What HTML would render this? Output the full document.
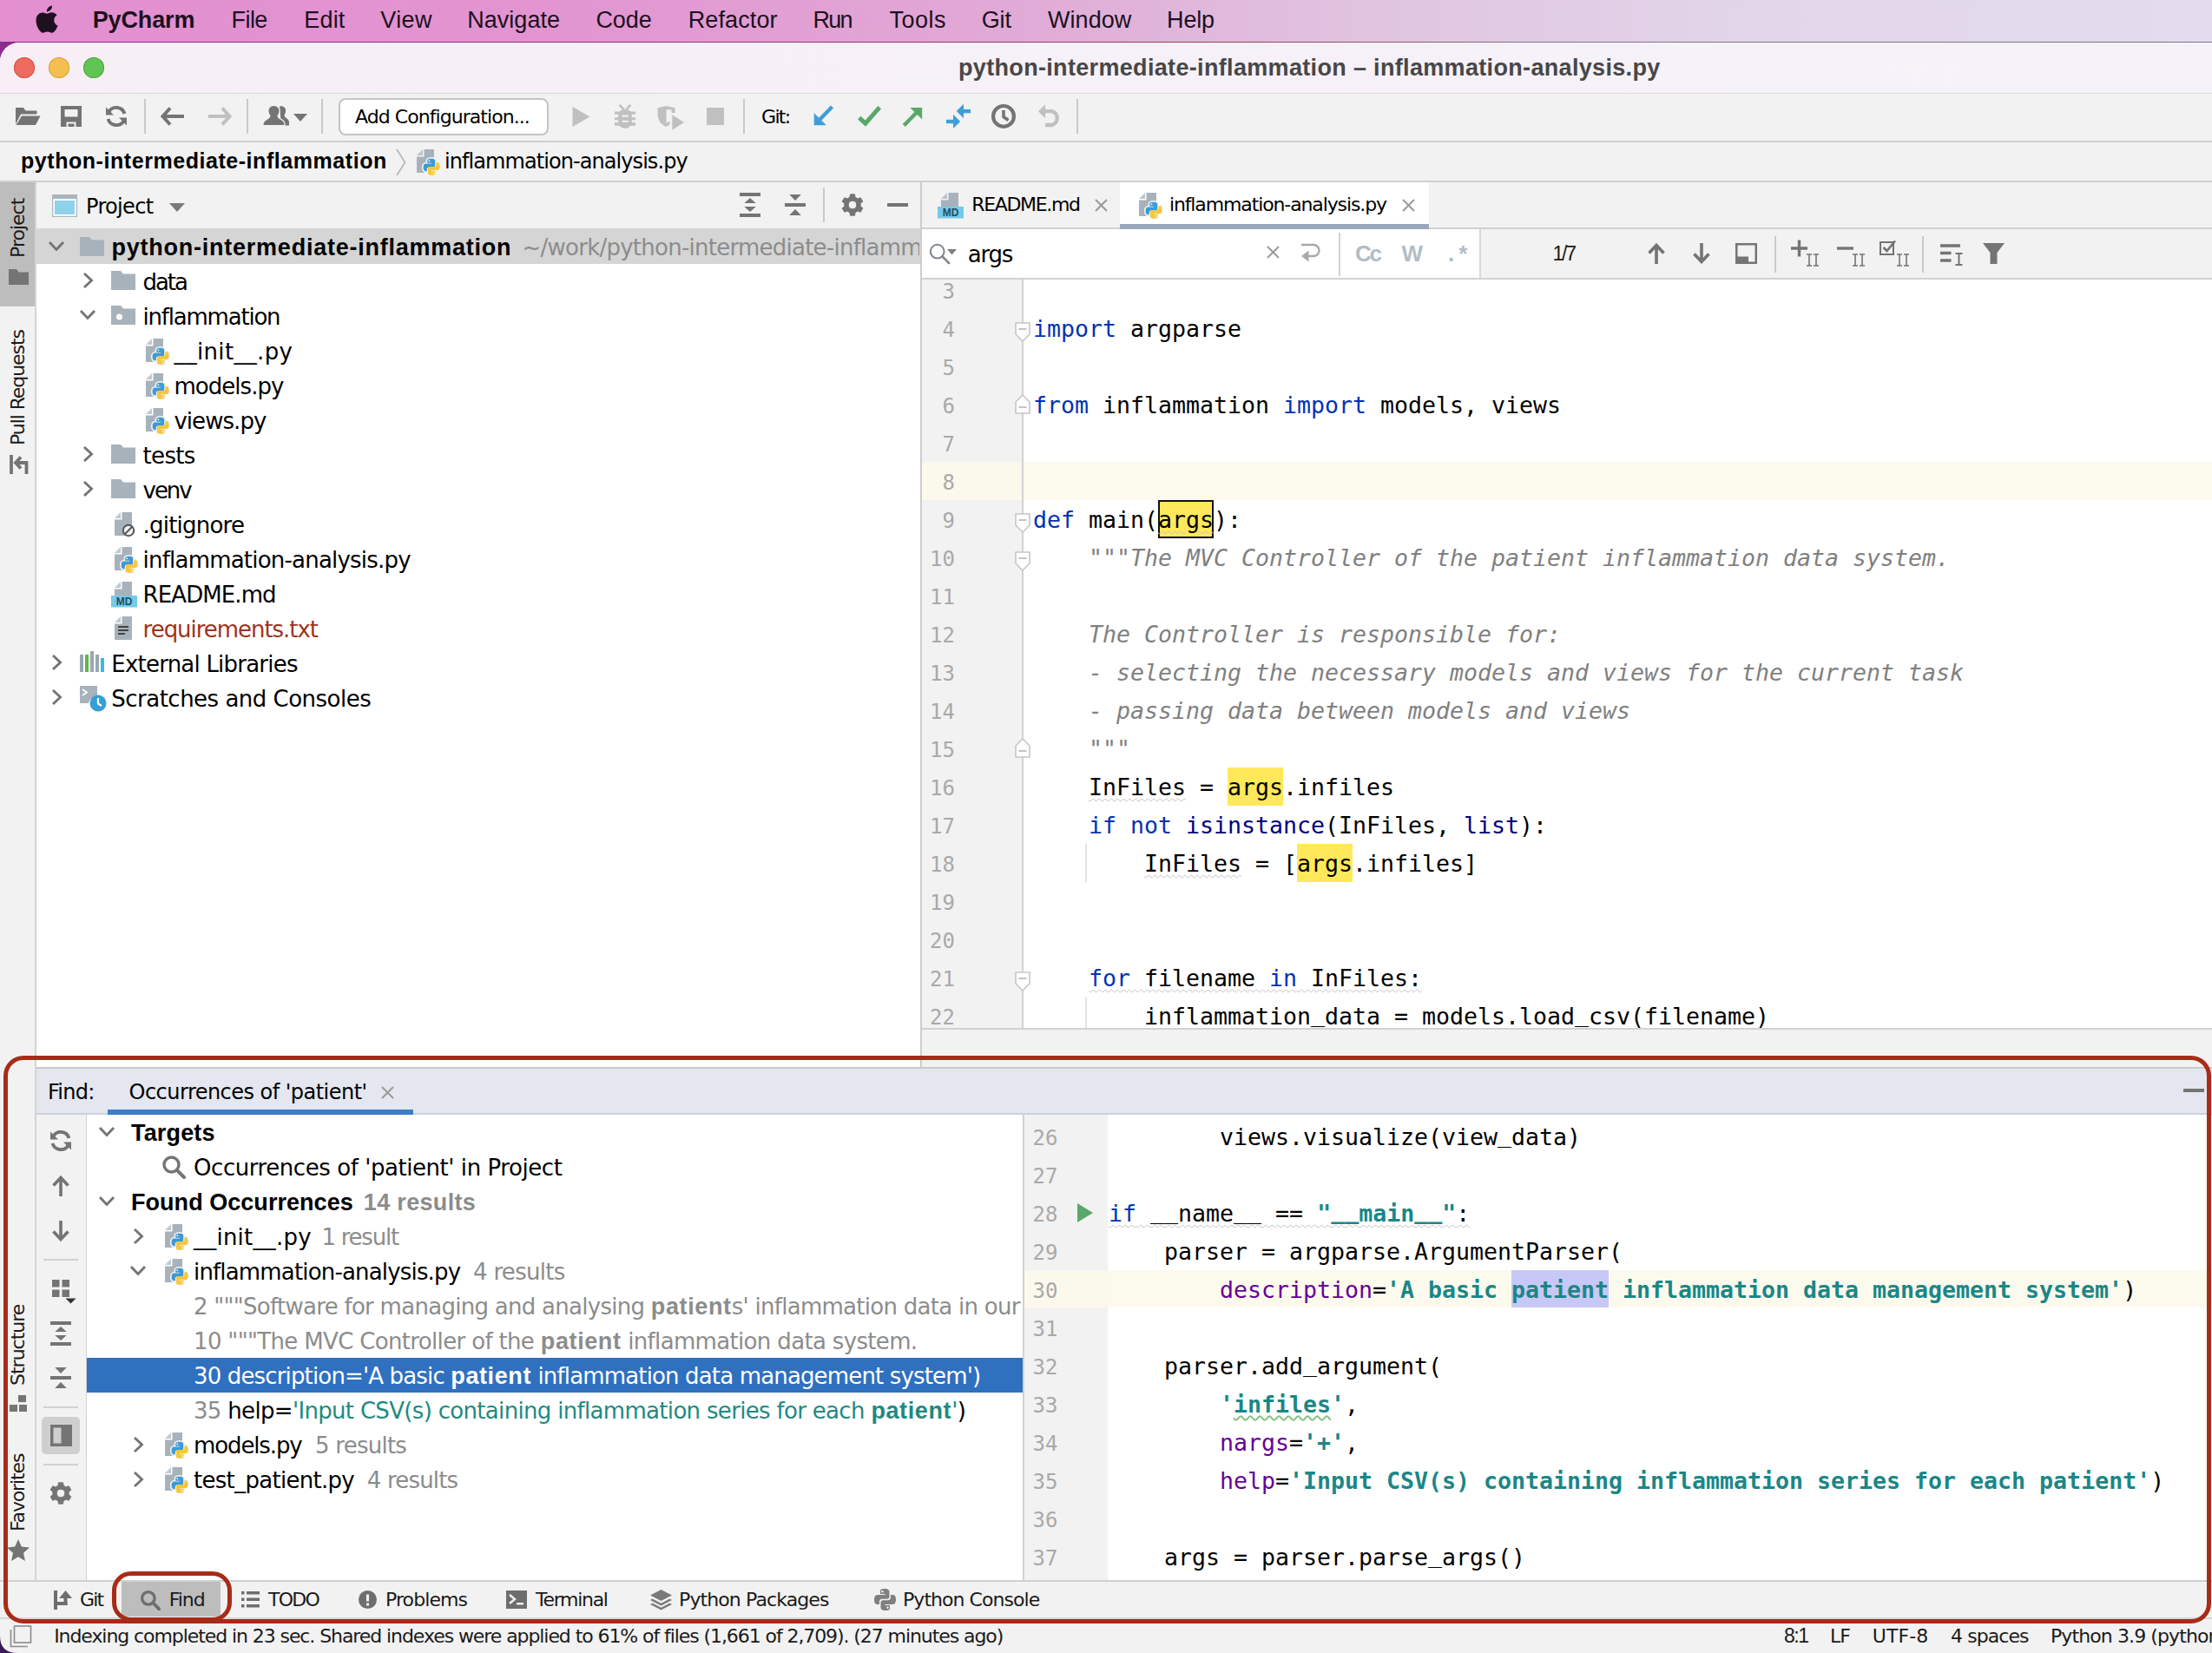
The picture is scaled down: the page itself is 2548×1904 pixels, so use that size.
<!DOCTYPE html>
<html><head><meta charset="utf-8"><title>PyCharm</title>
<style>
html,body{margin:0;padding:0;}
body{width:2548px;height:1904px;position:relative;overflow:hidden;background:#f2f2f2;}
#root{position:absolute;left:0;top:0;width:2548px;height:1904px;overflow:hidden;}
#root div,#root svg,#root span.t{position:absolute;}
span.t{white-space:pre;}
.k{color:#0033b3}.b{color:#000080}.s{color:#1a8787;font-weight:700}.c{color:#808080;font-style:italic}.p{color:#660099}
.hl{background:#fbe54d}.hc{background:#fbe54d;box-shadow:0 0 0 2px #1a1a1a}
.wv{text-decoration:underline wavy #c2c2c2 1.3px;text-underline-offset:3px}
.wg{text-decoration:underline wavy #7fbf7f 1.5px;text-underline-offset:3px}
.g{color:#8c8c8c}
.u{position:relative;top:-3px}
span.t b{font-family:'Liberation Sans',sans-serif;font-size:1.04em;letter-spacing:0.6px}

</style></head><body><div id="root">
<div style="left:0px;top:0px;width:2548px;height:49px;background:linear-gradient(90deg,#e38fd0 0%,#e295d1 25%,#e1a9d6 45%,#e0c4e0 62%,#e2d6ea 80%,#e4dbee 100%);"></div>
<div style="left:0px;top:48px;width:2548px;height:24px;background:linear-gradient(90deg,#8b2a8f 0%,#8e2f7c 30%,#96404f 55%,#7a7a80 70%,#77777c 100%);"></div>
<div style="left:0px;top:49px;width:2548px;height:1860px;background:#f6eff6;border-radius:22px 0 0 0;"></div>
<div style="left:0px;top:49px;width:2548px;height:58px;background:linear-gradient(90deg,#f7eef6 0%,#f6f1f8 60%,#f5f3f9 100%);border-radius:22px 0 0 0;"></div>
<svg style="left:39px;top:5px;" width="28" height="34.5" viewBox="0 0 26 32"><path fill="#1d1020" d="M21.6 16.9c0-3.6 2.9-5.3 3.1-5.4-1.7-2.5-4.3-2.8-5.2-2.8-2.2-.2-4.3 1.3-5.4 1.3s-2.9-1.3-4.7-1.2c-2.4 0-4.7 1.4-5.9 3.6-2.5 4.4-.6 10.9 1.8 14.4 1.2 1.7 2.6 3.7 4.5 3.6 1.8-.1 2.5-1.2 4.700-1.2s2.800 1.200 4.700 1.100c2-.0 3.200-1.800 4.400-3.500 1.400-2 1.900-3.900 2-4-.1 0-3.900-1.500-4-5.900zM18 5.900c1-1.200 1.700-2.900 1.500-4.600-1.400.1-3.200 1-4.200 2.200-.9 1.100-1.700 2.800-1.500 4.400 1.600.1 3.200-.8 4.200-2z"/></svg>
<span class="t" style="left:106.7px;top:10.0px;font:700 27px/27px 'Liberation Sans','DejaVu Sans',sans-serif;color:#1d1020;letter-spacing:-0.12px;">PyCharm</span>
<span class="t" style="left:266.6px;top:10.0px;font:400 27px/27px 'Liberation Sans','DejaVu Sans',sans-serif;color:#1d1020;letter-spacing:-0.60px;">File</span>
<span class="t" style="left:350.3px;top:10.0px;font:400 27px/27px 'Liberation Sans','DejaVu Sans',sans-serif;color:#1d1020;letter-spacing:0.17px;">Edit</span>
<span class="t" style="left:438.3px;top:10.0px;font:400 27px/27px 'Liberation Sans','DejaVu Sans',sans-serif;color:#1d1020;letter-spacing:0.40px;">View</span>
<span class="t" style="left:538.3px;top:10.0px;font:400 27px/27px 'Liberation Sans','DejaVu Sans',sans-serif;color:#1d1020;letter-spacing:0.01px;">Navigate</span>
<span class="t" style="left:686.4px;top:10.0px;font:400 27px/27px 'Liberation Sans','DejaVu Sans',sans-serif;color:#1d1020;letter-spacing:-0.03px;">Code</span>
<span class="t" style="left:792.7px;top:10.0px;font:400 27px/27px 'Liberation Sans','DejaVu Sans',sans-serif;color:#1d1020;letter-spacing:0.11px;">Refactor</span>
<span class="t" style="left:936.6px;top:10.0px;font:400 27px/27px 'Liberation Sans','DejaVu Sans',sans-serif;color:#1d1020;letter-spacing:-1.75px;">Run</span>
<span class="t" style="left:1024.6px;top:10.0px;font:400 27px/27px 'Liberation Sans','DejaVu Sans',sans-serif;color:#1d1020;letter-spacing:0.48px;">Tools</span>
<span class="t" style="left:1130.7px;top:10.0px;font:400 27px/27px 'Liberation Sans','DejaVu Sans',sans-serif;color:#1d1020;letter-spacing:-0.15px;">Git</span>
<span class="t" style="left:1207.0px;top:10.0px;font:400 27px/27px 'Liberation Sans','DejaVu Sans',sans-serif;color:#1d1020;letter-spacing:0.06px;">Window</span>
<span class="t" style="left:1344.1px;top:10.0px;font:400 27px/27px 'Liberation Sans','DejaVu Sans',sans-serif;color:#1d1020;letter-spacing:-0.17px;">Help</span>
<div style="left:16px;top:66px;width:24px;height:24px;background:#ed6a5f;border-radius:50%;box-shadow:inset 0 0 0 1px #d5544a;"></div>
<div style="left:56px;top:66px;width:24px;height:24px;background:#f5bf4f;border-radius:50%;box-shadow:inset 0 0 0 1px #d8a33c;"></div>
<div style="left:96px;top:66px;width:24px;height:24px;background:#61c555;border-radius:50%;box-shadow:inset 0 0 0 1px #4fa73f;"></div>
<span class="t" style="left:1104.0px;top:64.5px;font:700 27px/27px 'Liberation Sans','DejaVu Sans',sans-serif;color:#474747;letter-spacing:0.33px;">python-intermediate-inflammation – inflammation-analysis.py</span>
<div style="left:0px;top:107px;width:2548px;height:56px;background:#f2f2f2;"></div>
<div style="left:0px;top:107px;width:2548px;height:1px;background:#dcdcdc;"></div>
<div style="left:0px;top:162px;width:2548px;height:2px;background:#cfcfcf;"></div>
<svg style="left:17px;top:123px;" width="30" height="22" viewBox="0 0 30 22"><path fill="#747474" d="M1 1 H10 L12.500 4.500 H25.500 V8.500 H7 L1 20 Z"/><path fill="#747474" d="M8 10.500 H29.500 L24 21 H1.500 Z"/></svg>
<svg style="left:70px;top:122px;" width="24" height="24" viewBox="0 0 24 24"><path fill="#747474" fill-rule="evenodd" d="M0 0 H24 V24 H0 Z M4.500 4 V12.500 H19.500 V4 Z M6.500 18.500 V24 H17.500 V18.500 Z"/><rect x="8.500" y="20.500" width="7" height="3.500" fill="#747474"/></svg>
<svg style="left:121px;top:121px;" width="26" height="26" viewBox="0 0 26 26"><path d="M22.500 10 A10 10 0 0 0 4.500 7.500" fill="none" stroke="#747474" stroke-width="3.900"/><path fill="#747474" d="M1 2.500 V11.500 H10 Z"/><path d="M3.500 16 A10 10 0 0 0 21.500 18.500" fill="none" stroke="#747474" stroke-width="3.900"/><path fill="#747474" d="M25 23.500 V14.500 H16 Z"/></svg>
<div style="left:166px;top:114px;width:2px;height:40px;background:#c9c9c9;"></div>
<div style="left:284px;top:114px;width:2px;height:40px;background:#c9c9c9;"></div>
<div style="left:370px;top:114px;width:2px;height:40px;background:#c9c9c9;"></div>
<div style="left:856px;top:114px;width:2px;height:40px;background:#c9c9c9;"></div>
<div style="left:1240px;top:114px;width:2px;height:40px;background:#c9c9c9;"></div>
<svg style="left:185px;top:123px;" width="28" height="22" viewBox="0 0 28 22"><path d="M11 1.500 L2.500 11 L11 20.500 M3 11 H27" fill="none" stroke="#747474" stroke-width="4"/></svg>
<svg style="left:239px;top:123px;" width="28" height="22" viewBox="0 0 28 22"><path d="M17 1.500 L25.500 11 L17 20.500 M25 11 H1" fill="none" stroke="#c0c0c0" stroke-width="4"/></svg>
<svg style="left:303px;top:121px;" width="30" height="24" viewBox="0 0 30 24"><g fill="#747474"><path d="M19 1.500 c4.500 -1.500 8 2 7 6 c-0.500 2.500 -1 3.500 -1.500 4.500 c0.500 3 5.500 3.500 5.500 8 V23.500 H21 Z"/><path stroke="#f2f2f2" stroke-width="1.200" d="M12.500 0.500 c4.500 0 7 3 6.500 7 c-0.300 2.500 -1.200 4 -2 5.200 c0.500 4 8 3.300 8 9.300 V23.500 H0 V22 c0 -6 7.500 -5.300 8 -9.300 c-0.800 -1.200 -1.700 -2.700 -2 -5.200 c-0.500 -4 2 -7 6.500 -7 Z"/></g></svg>
<svg style="left:338px;top:131px;" width="16" height="9" viewBox="0 0 16 9"><path fill="#747474" d="M0 0 H16 L8 9 Z"/></svg>
<svg style="left:659px;top:123px;" width="21" height="23" viewBox="0 0 21 23"><path fill="#c0c0c0" d="M0.500 0 L20.500 11.500 L0.500 23 Z"/></svg>
<svg style="left:708px;top:120px;" width="24" height="28" viewBox="0 0 24 28"><g fill="#c0c0c0"><path d="M12 5.400 C17 5.400 19.800 9.500 19.800 14 V19 C19.800 24.500 16.500 28 12 28 C7.500 28 4.200 24.500 4.200 19 V14 C4.200 9.500 7 5.400 12 5.400 Z"/><rect x="0" y="8.500" width="24" height="3.200"/><rect x="0" y="15.300" width="24" height="2.800"/><rect x="0" y="21.200" width="24" height="3.600"/></g><path d="M5.500 0.800 L10.500 5.800 M18.500 0.800 L13.500 5.800" stroke="#c0c0c0" stroke-width="2.600" fill="none"/><g fill="#f2f2f2"><rect x="8.500" y="12.500" width="7.200" height="2.200"/><rect x="8.500" y="18.800" width="7.200" height="2"/></g></svg>
<svg style="left:757px;top:122px;" width="31" height="28" viewBox="0 0 31 28"><path fill="#c0c0c0" d="M0.600 2.300 L10.500 0 L20.500 2.300 V8 H16.500 V4.200 L10.500 4.200 V20 L14.500 17.500 V21.500 L10.500 24 C3.500 21 0.600 15.500 0.600 9 Z"/><path fill="#c0c0c0" d="M17.300 10.200 L31 19 L17.300 27.800 Z"/></svg>
<svg style="left:814px;top:124px;" width="20" height="20" viewBox="0 0 20 20"><rect width="20" height="20" fill="#c0c0c0"/></svg>
<svg style="left:937px;top:121px;" width="24" height="24" viewBox="0 0 24 24"><path d="M21.500 2 L7 17" stroke="#3f9ed8" stroke-width="4.400" fill="none"/><path fill="#3f9ed8" d="M0.700 9.300 V23.300 H14.800 Z"/></svg>
<svg style="left:987px;top:121px;" width="29" height="25" viewBox="0 0 29 25"><path d="M2.700 14.600 L9.900 21.100 L26.200 2.700" fill="none" stroke="#59a869" stroke-width="5"/></svg>
<svg style="left:1039px;top:122px;" width="24" height="24" viewBox="0 0 24 24"><path d="M2.200 22.500 L16.500 8" stroke="#59a869" stroke-width="4.400" fill="none"/><path fill="#59a869" d="M9.300 2 H23.200 V15.500 Z"/></svg>
<svg style="left:1089px;top:119px;" width="30" height="30" viewBox="0 0 30 30"><g fill="#3f9ed8"><path d="M12.800 9.100 L21 0.800 V17.200 Z"/><rect x="20.500" y="6.900" width="8.600" height="4.400"/><path d="M17.100 20.900 L9 12.700 V29 Z"/><rect x="0.900" y="18.800" width="8.600" height="4.400"/></g></svg>
<svg style="left:1141px;top:119px;" width="30" height="30" viewBox="0 0 30 30"><circle cx="15" cy="14.900" r="11.900" fill="none" stroke="#747474" stroke-width="4.200"/><path d="M15 8 V15.500 L20.500 19.500" fill="none" stroke="#747474" stroke-width="3.600"/></svg>
<svg style="left:1195px;top:120px;" width="28" height="27" viewBox="0 0 28 27"><path d="M8.500 8.200 H17 A8.300 8.300 0 0 1 17 24 H9" fill="none" stroke="#c0c0c0" stroke-width="4.300"/><path fill="#c0c0c0" d="M1 8.200 L9 0.200 V16.200 Z"/></svg>
<div style="left:390px;top:112.5px;width:242px;height:43px;background:#fff;border:2px solid #c4c4c4;border-radius:8px;box-sizing:border-box;"></div>
<span class="t" style="left:409.0px;top:124.4px;font:400 22px/22px 'DejaVu Sans','Liberation Sans',sans-serif;color:#000;letter-spacing:-0.95px;">Add Configuration...</span>
<span class="t" style="left:877.0px;top:123.9px;font:400 22px/22px 'DejaVu Sans','Liberation Sans',sans-serif;color:#000;letter-spacing:-1.67px;">Git:</span>
<div style="left:0px;top:164px;width:2548px;height:44px;background:#f2f2f2;"></div>
<div style="left:0px;top:208px;width:2548px;height:2px;background:#cfcfcf;"></div>
<span class="t" style="left:24.0px;top:173.4px;font:700 25.0px/25.0px 'Liberation Sans','DejaVu Sans',sans-serif;color:#000;letter-spacing:0.55px;">python-intermediate-inflammation</span>
<svg style="left:456px;top:171px;" width="12" height="32" viewBox="0 0 12 32"><path d="M1 1 L10.500 16 L1 31" fill="none" stroke="#b0b4b8" stroke-width="1.600"/></svg>
<svg style="left:480px;top:172px;" width="28" height="30" viewBox="0 0 28 30"><path fill="#a7b2bb" d="M8.500 0 H20 V27 H0 V8.500 H8.500 Z"/><path fill="#a7b2bb" opacity="0.7" d="M0 7 L7 0 V7 Z"/>
<g transform="translate(7.600,10.700) scale(0.845)">
<path fill="#f2f2f2" stroke="#f2f2f2" stroke-width="4" d="M11 0 C5 0 5.500 2.600 5.500 2.600 V6 H11.200 V7 H3.300 C3.300 7 0 6.600 0 12 C0 17.400 2.900 17.200 2.900 17.200 H5 V14.500 C5 14.500 4.900 11.600 7.800 11.600 H13.400 C13.400 11.600 16.100 11.700 16.100 9 V3.200 C16.100 3.200 16.500 0 11 0 Z"/>
<path fill="#f2f2f2" stroke="#f2f2f2" stroke-width="3" d="M11.300 22.500 C16.800 22.500 16.400 20.100 16.400 20.100 V16.700 H11.200 V15.700 H19 C19 15.700 22.500 16.100 22.500 10.600 C22.500 5.200 19.400 5.400 19.400 5.400 H17.600 V7.900 C17.600 7.900 17.700 11 14.600 11 H9.200 C9.200 11 6.300 10.900 6.300 13.800 V19.200 C6.300 19.200 5.900 22.500 11.300 22.500 Z"/>
<path fill="#3d9ad6" d="M11 0 C5 0 5.500 2.600 5.500 2.600 V6 H11.200 V7 H3.300 C3.300 7 0 6.600 0 12 C0 17.400 2.900 17.200 2.900 17.200 H5 V14.500 C5 14.500 4.900 11.600 7.800 11.600 H13.400 C13.400 11.600 16.100 11.700 16.100 9 V3.200 C16.100 3.200 16.500 0 11 0 Z"/>
<path fill="#f5c83c" d="M11.300 22.500 C16.800 22.500 16.400 20.100 16.400 20.100 V16.700 H11.200 V15.700 H19 C19 15.700 22.500 16.100 22.500 10.600 C22.500 5.200 19.400 5.400 19.400 5.400 H17.600 V7.900 C17.600 7.900 17.700 11 14.600 11 H9.200 C9.200 11 6.300 10.900 6.300 13.800 V19.200 C6.300 19.200 5.900 22.500 11.300 22.500 Z"/>
<circle cx="8" cy="3" r="1.100" fill="#f2f2f2"/><circle cx="14.500" cy="19.600" r="1.100" fill="#f2f2f2"/>
</g></svg>
<span class="t" style="left:512.0px;top:174.4px;font:400 24px/24px 'DejaVu Sans','Liberation Sans',sans-serif;color:#000;letter-spacing:-0.93px;">inflammation-analysis.py</span>
<div style="left:0px;top:210px;width:41px;height:1610px;background:#f2f2f2;"></div>
<div style="left:40px;top:210px;width:2px;height:1610px;background:#d4d4d4;"></div>
<div style="left:0px;top:210px;width:40px;height:143px;background:#bdbdbd;"></div>
<span class="t" style="left:9.9px;top:-10.6px;font:400 22px/22px 'DejaVu Sans','Liberation Sans',sans-serif;color:#1a1a1a;letter-spacing:-1.00px;top:297px;transform-origin:0 0;transform:rotate(-90deg);">Project</span>
<svg style="left:10px;top:310px;" width="23" height="18" viewBox="0 0 23 18"><path fill="#747474" d="M0 0 H9 L11.500 3.500 H23 V18 H0 Z"/></svg>
<span class="t" style="left:9.9px;top:-10.6px;font:400 22px/22px 'DejaVu Sans','Liberation Sans',sans-serif;color:#1a1a1a;letter-spacing:-1.08px;top:513px;transform-origin:0 0;transform:rotate(-90deg);">Pull Requests</span>
<svg style="left:11px;top:524px;" width="22" height="22" viewBox="0 0 22 22"><g fill="none" stroke="#747474" stroke-width="3.800"><path d="M2 0 V22"/><path d="M7.500 9 H19.500 V22"/><path d="M13 2.500 L7 9 L13 15.500"/></g></svg>
<span class="t" style="left:9.9px;top:-10.6px;font:400 22px/22px 'DejaVu Sans','Liberation Sans',sans-serif;color:#1a1a1a;letter-spacing:-1.00px;top:1596px;transform-origin:0 0;transform:rotate(-90deg);">Structure</span>
<svg style="left:11px;top:1607px;" width="21" height="20" viewBox="0 0 21 20"><g fill="#747474"><rect x="10" y="0" width="9" height="8"/><rect x="0" y="11" width="9" height="8"/><rect x="11" y="11" width="9" height="8"/></g></svg>
<span class="t" style="left:9.9px;top:-10.6px;font:400 22px/22px 'DejaVu Sans','Liberation Sans',sans-serif;color:#1a1a1a;letter-spacing:-1.12px;top:1764px;transform-origin:0 0;transform:rotate(-90deg);">Favorites</span>
<svg style="left:8px;top:1773px;" width="26" height="25" viewBox="0 0 26 25"><path fill="#747474" d="M13 0 L16.800 8.600 L26 9.500 L19 15.800 L21 25 L13 20.200 L5 25 L7 15.800 L0 9.500 L9.200 8.600 Z"/></svg>
<div style="left:42px;top:210px;width:1018px;height:53px;background:#f2f2f2;"></div>
<div style="left:42px;top:263px;width:1018px;height:960px;background:#fff;"></div>
<svg style="left:60px;top:224px;" width="29" height="26" viewBox="0 0 29 26"><rect x="0.500" y="0.500" width="28" height="25" fill="#fff" stroke="#aab5bd" stroke-width="1.500"/><rect x="0" y="0" width="29" height="5" fill="#aab5bd"/><rect x="3" y="7" width="23" height="16" fill="#8fd2ea"/></svg>
<span class="t" style="left:99.0px;top:225.9px;font:400 24px/24px 'DejaVu Sans','Liberation Sans',sans-serif;color:#000;letter-spacing:-0.67px;">Project</span>
<svg style="left:195px;top:234px;" width="18" height="10" viewBox="0 0 18 10"><path fill="#7a7a7a" d="M0 0 H18 L9 10 Z"/></svg>
<svg style="left:852px;top:222px;" width="24" height="28" viewBox="0 0 24 28"><g fill="#747474"><rect x="0" y="0" width="24" height="4"/><rect x="0" y="24" width="24" height="4"/><path d="M12 6 L18.700 12 H5.300 Z"/><path d="M12 22 L18.700 16 H5.300 Z"/></g></svg>
<svg style="left:904px;top:224px;" width="24" height="24" viewBox="0 0 24 24"><g fill="#747474"><rect x="0" y="10" width="24" height="4"/><path d="M12 7 L18.800 0 H5.200 Z"/><path d="M12 17 L18.800 24 H5.200 Z"/></g></svg>
<div style="left:948px;top:216px;width:2px;height:40px;background:#c9c9c9;"></div>
<svg style="left:969px;top:223px;" width="26" height="26" viewBox="0 0 26 26"><path fill="#747474" fill-rule="evenodd" stroke="#747474" stroke-width="1" stroke-linejoin="round" d="M9.99 4.20 L10.42 0.87 L15.58 0.87 L16.01 4.20 L19.11 5.99 L22.21 4.70 L24.80 9.17 L22.13 11.21 L22.13 14.79 L24.80 16.83 L22.21 21.30 L19.11 20.01 L16.01 21.80 L15.58 25.13 L10.42 25.13 L9.99 21.80 L6.89 20.01 L3.79 21.30 L1.20 16.83 L3.87 14.79 L3.87 11.21 L1.20 9.17 L3.79 4.70 L6.89 5.99 Z M13 8.200 a4.800 4.800 0 1 0 0.010 0 Z"/></svg>
<div style="left:1022px;top:234px;width:24px;height:4px;background:#747474;"></div>
<div style="left:1060px;top:210px;width:2px;height:1019px;background:#cdcdcd;"></div>
<div style="left:42px;top:262.5px;width:1018px;height:41px;background:#d5d5d5;"></div>
<svg style="left:55px;top:276.5px;" width="20" height="14" viewBox="0 0 20 14"><path d="M2 2 L10 10.500 L18 2" fill="none" stroke="#747474" stroke-width="2.900"/></svg>
<svg style="left:92px;top:272.5px;" width="28" height="22" viewBox="0 0 28 22"><path fill="#a7b2bb" d="M0 0 H11 L14 3.500 H28 V22 H0 Z"/></svg>
<span class="t" style="left:128.5px;top:272.0px;font:700 27.0px/27.0px 'Liberation Sans','DejaVu Sans',sans-serif;color:#000;letter-spacing:0.76px;">python-intermediate-inflammation</span>
<div style="left:600px;top:264px;width:459px;height:39px;background:transparent;overflow:hidden;"></div>
<div style="left:600px;top:264px;width:459px;height:39px;overflow:hidden;"><span class="t" style="position:absolute;left:1.5px;top:7.5px;font:400 26px/26px 'DejaVu Sans','Liberation Sans',sans-serif;color:#8c8c8c;letter-spacing:-0.75px;">~/work/python-intermediate-inflammation</span></div>
<svg style="left:94.5px;top:313px;" width="14" height="20" viewBox="0 0 14 20"><path d="M2 2 L10.500 10 L2 18" fill="none" stroke="#747474" stroke-width="2.900"/></svg>
<svg style="left:128px;top:312px;" width="28" height="22" viewBox="0 0 28 22"><path fill="#a7b2bb" d="M0 0 H11 L14 3.500 H28 V22 H0 Z"/></svg>
<span class="t" style="left:164.6px;top:311.5px;font:400 26px/26px 'DejaVu Sans','Liberation Sans',sans-serif;color:#000;letter-spacing:-2.10px;">data</span>
<svg style="left:91.0px;top:356px;" width="20" height="14" viewBox="0 0 20 14"><path d="M2 2 L10 10.500 L18 2" fill="none" stroke="#747474" stroke-width="2.900"/></svg>
<svg style="left:128px;top:352px;" width="28" height="22" viewBox="0 0 28 22"><path fill="#a7b2bb" d="M0 0 H11 L14 3.500 H28 V22 H0 Z"/><circle cx="9.500" cy="13" r="3.600" fill="#fff"/></svg>
<span class="t" style="left:164.6px;top:351.5px;font:400 26px/26px 'DejaVu Sans','Liberation Sans',sans-serif;color:#000;letter-spacing:-1.22px;">inflammation</span>
<svg style="left:167.6px;top:390px;" width="28" height="30" viewBox="0 0 28 30"><path fill="#a7b2bb" d="M8.500 0 H20 V27 H0 V8.500 H8.500 Z"/><path fill="#a7b2bb" opacity="0.7" d="M0 7 L7 0 V7 Z"/>
<g transform="translate(7.600,10.700) scale(0.845)">
<path fill="#f2f2f2" stroke="#f2f2f2" stroke-width="4" d="M11 0 C5 0 5.500 2.600 5.500 2.600 V6 H11.200 V7 H3.300 C3.300 7 0 6.600 0 12 C0 17.400 2.900 17.200 2.900 17.200 H5 V14.500 C5 14.500 4.900 11.600 7.800 11.600 H13.400 C13.400 11.600 16.100 11.700 16.100 9 V3.200 C16.100 3.200 16.500 0 11 0 Z"/>
<path fill="#f2f2f2" stroke="#f2f2f2" stroke-width="3" d="M11.300 22.500 C16.800 22.500 16.400 20.100 16.400 20.100 V16.700 H11.200 V15.700 H19 C19 15.700 22.500 16.100 22.500 10.600 C22.500 5.200 19.400 5.400 19.400 5.400 H17.600 V7.900 C17.600 7.900 17.700 11 14.600 11 H9.200 C9.200 11 6.300 10.900 6.300 13.800 V19.200 C6.300 19.200 5.900 22.500 11.300 22.500 Z"/>
<path fill="#3d9ad6" d="M11 0 C5 0 5.500 2.600 5.500 2.600 V6 H11.200 V7 H3.300 C3.300 7 0 6.600 0 12 C0 17.400 2.900 17.200 2.900 17.200 H5 V14.500 C5 14.500 4.900 11.600 7.800 11.600 H13.400 C13.400 11.600 16.100 11.700 16.100 9 V3.200 C16.100 3.200 16.500 0 11 0 Z"/>
<path fill="#f5c83c" d="M11.300 22.500 C16.800 22.500 16.400 20.100 16.400 20.100 V16.700 H11.200 V15.700 H19 C19 15.700 22.500 16.100 22.500 10.600 C22.500 5.200 19.400 5.400 19.400 5.400 H17.600 V7.900 C17.600 7.900 17.700 11 14.600 11 H9.200 C9.200 11 6.300 10.900 6.300 13.800 V19.200 C6.300 19.200 5.900 22.500 11.300 22.500 Z"/>
<circle cx="8" cy="3" r="1.100" fill="#f2f2f2"/><circle cx="14.500" cy="19.600" r="1.100" fill="#f2f2f2"/>
</g></svg>
<span class="t" style="left:200.4px;top:391.5px;font:400 26px/26px 'DejaVu Sans','Liberation Sans',sans-serif;color:#000;letter-spacing:0.32px;">__init__.py</span>
<svg style="left:167.6px;top:430px;" width="28" height="30" viewBox="0 0 28 30"><path fill="#a7b2bb" d="M8.500 0 H20 V27 H0 V8.500 H8.500 Z"/><path fill="#a7b2bb" opacity="0.7" d="M0 7 L7 0 V7 Z"/>
<g transform="translate(7.600,10.700) scale(0.845)">
<path fill="#f2f2f2" stroke="#f2f2f2" stroke-width="4" d="M11 0 C5 0 5.500 2.600 5.500 2.600 V6 H11.200 V7 H3.300 C3.300 7 0 6.600 0 12 C0 17.400 2.900 17.200 2.900 17.200 H5 V14.500 C5 14.500 4.900 11.600 7.800 11.600 H13.400 C13.400 11.600 16.100 11.700 16.100 9 V3.200 C16.100 3.200 16.500 0 11 0 Z"/>
<path fill="#f2f2f2" stroke="#f2f2f2" stroke-width="3" d="M11.300 22.500 C16.800 22.500 16.400 20.100 16.400 20.100 V16.700 H11.200 V15.700 H19 C19 15.700 22.500 16.100 22.500 10.600 C22.500 5.200 19.400 5.400 19.400 5.400 H17.600 V7.900 C17.600 7.900 17.700 11 14.600 11 H9.200 C9.200 11 6.300 10.900 6.300 13.800 V19.200 C6.300 19.200 5.900 22.500 11.300 22.500 Z"/>
<path fill="#3d9ad6" d="M11 0 C5 0 5.500 2.600 5.500 2.600 V6 H11.200 V7 H3.300 C3.300 7 0 6.600 0 12 C0 17.400 2.900 17.200 2.900 17.200 H5 V14.500 C5 14.500 4.900 11.600 7.800 11.600 H13.400 C13.400 11.600 16.100 11.700 16.100 9 V3.200 C16.100 3.200 16.500 0 11 0 Z"/>
<path fill="#f5c83c" d="M11.300 22.500 C16.800 22.500 16.400 20.100 16.400 20.100 V16.700 H11.200 V15.700 H19 C19 15.700 22.500 16.100 22.500 10.600 C22.500 5.200 19.400 5.400 19.400 5.400 H17.600 V7.900 C17.600 7.900 17.700 11 14.600 11 H9.200 C9.200 11 6.300 10.900 6.300 13.800 V19.200 C6.300 19.200 5.900 22.500 11.300 22.500 Z"/>
<circle cx="8" cy="3" r="1.100" fill="#f2f2f2"/><circle cx="14.500" cy="19.600" r="1.100" fill="#f2f2f2"/>
</g></svg>
<span class="t" style="left:200.4px;top:431.5px;font:400 26px/26px 'DejaVu Sans','Liberation Sans',sans-serif;color:#000;letter-spacing:-0.96px;">models.py</span>
<svg style="left:167.6px;top:470px;" width="28" height="30" viewBox="0 0 28 30"><path fill="#a7b2bb" d="M8.500 0 H20 V27 H0 V8.500 H8.500 Z"/><path fill="#a7b2bb" opacity="0.7" d="M0 7 L7 0 V7 Z"/>
<g transform="translate(7.600,10.700) scale(0.845)">
<path fill="#f2f2f2" stroke="#f2f2f2" stroke-width="4" d="M11 0 C5 0 5.500 2.600 5.500 2.600 V6 H11.200 V7 H3.300 C3.300 7 0 6.600 0 12 C0 17.400 2.900 17.200 2.900 17.200 H5 V14.500 C5 14.500 4.900 11.600 7.800 11.600 H13.400 C13.400 11.600 16.100 11.700 16.100 9 V3.200 C16.100 3.200 16.500 0 11 0 Z"/>
<path fill="#f2f2f2" stroke="#f2f2f2" stroke-width="3" d="M11.300 22.500 C16.800 22.500 16.400 20.100 16.400 20.100 V16.700 H11.200 V15.700 H19 C19 15.700 22.500 16.100 22.500 10.600 C22.500 5.200 19.400 5.400 19.400 5.400 H17.600 V7.900 C17.600 7.900 17.700 11 14.600 11 H9.200 C9.200 11 6.300 10.900 6.300 13.800 V19.200 C6.300 19.200 5.900 22.500 11.300 22.500 Z"/>
<path fill="#3d9ad6" d="M11 0 C5 0 5.500 2.600 5.500 2.600 V6 H11.200 V7 H3.300 C3.300 7 0 6.600 0 12 C0 17.400 2.900 17.200 2.900 17.200 H5 V14.500 C5 14.500 4.900 11.600 7.800 11.600 H13.400 C13.400 11.600 16.100 11.700 16.100 9 V3.200 C16.100 3.200 16.500 0 11 0 Z"/>
<path fill="#f5c83c" d="M11.300 22.500 C16.800 22.500 16.400 20.100 16.400 20.100 V16.700 H11.200 V15.700 H19 C19 15.700 22.500 16.100 22.500 10.600 C22.500 5.200 19.400 5.400 19.400 5.400 H17.600 V7.900 C17.600 7.900 17.700 11 14.600 11 H9.200 C9.200 11 6.300 10.900 6.300 13.800 V19.200 C6.300 19.200 5.900 22.500 11.300 22.500 Z"/>
<circle cx="8" cy="3" r="1.100" fill="#f2f2f2"/><circle cx="14.500" cy="19.600" r="1.100" fill="#f2f2f2"/>
</g></svg>
<span class="t" style="left:200.4px;top:471.5px;font:400 26px/26px 'DejaVu Sans','Liberation Sans',sans-serif;color:#000;letter-spacing:-0.94px;">views.py</span>
<svg style="left:94.5px;top:513px;" width="14" height="20" viewBox="0 0 14 20"><path d="M2 2 L10.500 10 L2 18" fill="none" stroke="#747474" stroke-width="2.900"/></svg>
<svg style="left:128px;top:512px;" width="28" height="22" viewBox="0 0 28 22"><path fill="#a7b2bb" d="M0 0 H11 L14 3.500 H28 V22 H0 Z"/></svg>
<span class="t" style="left:164.6px;top:511.5px;font:400 26px/26px 'DejaVu Sans','Liberation Sans',sans-serif;color:#000;letter-spacing:-0.70px;">tests</span>
<svg style="left:94.5px;top:553px;" width="14" height="20" viewBox="0 0 14 20"><path d="M2 2 L10.500 10 L2 18" fill="none" stroke="#747474" stroke-width="2.900"/></svg>
<svg style="left:128px;top:552px;" width="28" height="22" viewBox="0 0 28 22"><path fill="#a7b2bb" d="M0 0 H11 L14 3.500 H28 V22 H0 Z"/></svg>
<span class="t" style="left:164.6px;top:551.5px;font:400 26px/26px 'DejaVu Sans','Liberation Sans',sans-serif;color:#000;letter-spacing:-2.10px;">venv</span>
<svg style="left:130px;top:590px;" width="28" height="30" viewBox="0 0 28 30"><g transform="translate(2,0)"><path fill="#a7b2bb" d="M8.500 0 H20 V27 H0 V8.500 H8.500 Z"/><path fill="#a7b2bb" opacity="0.7" d="M0 7 L7 0 V7 Z"/></g><circle cx="18" cy="21" r="6.200" fill="#f2f2f2" stroke="#555" stroke-width="2"/><path d="M13.800 25.200 L22.200 16.800" stroke="#555" stroke-width="2"/></svg>
<span class="t" style="left:164.6px;top:591.5px;font:400 26px/26px 'DejaVu Sans','Liberation Sans',sans-serif;color:#000;letter-spacing:-0.79px;">.gitignore</span>
<svg style="left:132px;top:630px;" width="28" height="30" viewBox="0 0 28 30"><path fill="#a7b2bb" d="M8.500 0 H20 V27 H0 V8.500 H8.500 Z"/><path fill="#a7b2bb" opacity="0.7" d="M0 7 L7 0 V7 Z"/>
<g transform="translate(7.600,10.700) scale(0.845)">
<path fill="#f2f2f2" stroke="#f2f2f2" stroke-width="4" d="M11 0 C5 0 5.500 2.600 5.500 2.600 V6 H11.200 V7 H3.300 C3.300 7 0 6.600 0 12 C0 17.400 2.900 17.200 2.900 17.200 H5 V14.500 C5 14.500 4.900 11.600 7.800 11.600 H13.400 C13.400 11.600 16.100 11.700 16.100 9 V3.200 C16.100 3.200 16.500 0 11 0 Z"/>
<path fill="#f2f2f2" stroke="#f2f2f2" stroke-width="3" d="M11.300 22.500 C16.800 22.500 16.400 20.100 16.400 20.100 V16.700 H11.200 V15.700 H19 C19 15.700 22.500 16.100 22.500 10.600 C22.500 5.200 19.400 5.400 19.400 5.400 H17.600 V7.900 C17.600 7.900 17.700 11 14.600 11 H9.200 C9.200 11 6.300 10.900 6.300 13.800 V19.200 C6.300 19.200 5.900 22.500 11.300 22.500 Z"/>
<path fill="#3d9ad6" d="M11 0 C5 0 5.500 2.600 5.500 2.600 V6 H11.200 V7 H3.300 C3.300 7 0 6.600 0 12 C0 17.400 2.900 17.200 2.900 17.200 H5 V14.500 C5 14.500 4.900 11.600 7.800 11.600 H13.400 C13.400 11.600 16.100 11.700 16.100 9 V3.200 C16.100 3.200 16.500 0 11 0 Z"/>
<path fill="#f5c83c" d="M11.300 22.500 C16.800 22.500 16.400 20.100 16.400 20.100 V16.700 H11.200 V15.700 H19 C19 15.700 22.500 16.100 22.500 10.600 C22.500 5.200 19.400 5.400 19.400 5.400 H17.600 V7.900 C17.600 7.900 17.700 11 14.600 11 H9.200 C9.200 11 6.300 10.900 6.300 13.800 V19.200 C6.300 19.200 5.900 22.500 11.300 22.500 Z"/>
<circle cx="8" cy="3" r="1.100" fill="#f2f2f2"/><circle cx="14.500" cy="19.600" r="1.100" fill="#f2f2f2"/>
</g></svg>
<span class="t" style="left:164.6px;top:631.5px;font:400 26px/26px 'DejaVu Sans','Liberation Sans',sans-serif;color:#000;letter-spacing:-0.79px;">inflammation-analysis.py</span>
<svg style="left:128px;top:670px;" width="30" height="30" viewBox="0 0 30 30"><g transform="translate(4,0)"><path fill="#a7b2bb" d="M8.500 0 H20 V27 H0 V8.500 H8.500 Z"/><path fill="#a7b2bb" opacity="0.7" d="M0 7 L7 0 V7 Z"/></g><rect x="0" y="16" width="30" height="13.500" fill="#fff"/><rect x="0" y="16" width="30" height="13.500" fill="#40b6e0" opacity="0.72"/><text x="15" y="27.300" font-family="'Liberation Sans',sans-serif" font-weight="700" font-size="12" fill="#234a5e" text-anchor="middle">MD</text></svg>
<span class="t" style="left:164.6px;top:671.5px;font:400 26px/26px 'DejaVu Sans','Liberation Sans',sans-serif;color:#000;letter-spacing:-0.91px;">README.md</span>
<svg style="left:129px;top:710px;" width="26" height="28" viewBox="0 0 26 28"><g transform="translate(3,0)"><path fill="#a7b2bb" d="M8.500 0 H20 V27 H0 V8.500 H8.500 Z"/><path fill="#a7b2bb" opacity="0.7" d="M0 7 L7 0 V7 Z"/></g><g fill="#444"><rect x="7" y="11" width="12" height="2"/><rect x="7" y="15" width="12" height="2"/><rect x="7" y="19" width="8" height="2"/></g></svg>
<span class="t" style="left:164.6px;top:711.5px;font:400 26px/26px 'DejaVu Sans','Liberation Sans',sans-serif;color:#a0331a;letter-spacing:-1.04px;">requirements.txt</span>
<svg style="left:59px;top:753px;" width="14" height="20" viewBox="0 0 14 20"><path d="M2 2 L10.500 10 L2 18" fill="none" stroke="#747474" stroke-width="2.900"/></svg>
<svg style="left:92px;top:750px;" width="28" height="24" viewBox="0 0 28 24"><rect x="0" y="4" width="4" height="20" fill="#9aa7b0"/><rect x="6" y="4" width="4" height="20" fill="#62b543"/><rect x="12" y="0" width="4" height="24" fill="#9aa7b0"/><rect x="18" y="4" width="4" height="20" fill="#9aa7b0"/><rect x="24" y="8" width="4" height="16" fill="#40b6e0"/></svg>
<span class="t" style="left:128.3px;top:751.5px;font:400 26px/26px 'DejaVu Sans','Liberation Sans',sans-serif;color:#000;letter-spacing:-0.78px;">External Libraries</span>
<svg style="left:59px;top:793px;" width="14" height="20" viewBox="0 0 14 20"><path d="M2 2 L10.500 10 L2 18" fill="none" stroke="#747474" stroke-width="2.900"/></svg>
<svg style="left:92px;top:790px;" width="31" height="30" viewBox="0 0 31 30"><path fill="#a7b2bb" d="M0 0 H20 V12 A10 10 0 0 0 10 20 H0 Z"/><path d="M3 4 L8 7.500 L3 11" fill="none" stroke="#fff" stroke-width="1.800"/><circle cx="21" cy="20" r="9.500" fill="#389fd6"/><path d="M21 14 V20.500 L25 23" fill="none" stroke="#fff" stroke-width="2.200"/></svg>
<span class="t" style="left:128.3px;top:791.5px;font:400 26px/26px 'DejaVu Sans','Liberation Sans',sans-serif;color:#000;letter-spacing:-0.51px;">Scratches and Consoles</span>
<div style="left:1062px;top:210px;width:1486px;height:53px;background:#f2f2f2;"></div>
<div style="left:1062px;top:262px;width:1486px;height:2px;background:#d1d1d1;"></div>
<svg style="left:1080px;top:222px;" width="30" height="30" viewBox="0 0 30 30"><g transform="translate(4,0)"><path fill="#a7b2bb" d="M8.500 0 H20 V27 H0 V8.500 H8.500 Z"/><path fill="#a7b2bb" opacity="0.7" d="M0 7 L7 0 V7 Z"/></g><rect x="0" y="16" width="30" height="13.500" fill="#fff"/><rect x="0" y="16" width="30" height="13.500" fill="#40b6e0" opacity="0.72"/><text x="15" y="27.300" font-family="'Liberation Sans',sans-serif" font-weight="700" font-size="12" fill="#234a5e" text-anchor="middle">MD</text></svg>
<span class="t" style="left:1119.3px;top:225.4px;font:400 22px/22px 'DejaVu Sans','Liberation Sans',sans-serif;color:#000;letter-spacing:-1.34px;">README.md</span>
<svg style="left:1261px;top:229px;" width="15" height="15" viewBox="0 0 15 15"><path d="M1 1 L14 14 M14 1 L1 14" stroke="#9a9a9a" stroke-width="2" fill="none"/></svg>
<div style="left:1290px;top:210px;width:356px;height:49px;background:#fff;"></div>
<div style="left:1290px;top:258px;width:356px;height:6px;background:#9aa7bf;"></div>
<svg style="left:1312px;top:222px;" width="28" height="30" viewBox="0 0 28 30"><path fill="#a7b2bb" d="M8.500 0 H20 V27 H0 V8.500 H8.500 Z"/><path fill="#a7b2bb" opacity="0.7" d="M0 7 L7 0 V7 Z"/>
<g transform="translate(7.600,10.700) scale(0.845)">
<path fill="#f2f2f2" stroke="#f2f2f2" stroke-width="4" d="M11 0 C5 0 5.500 2.600 5.500 2.600 V6 H11.200 V7 H3.300 C3.300 7 0 6.600 0 12 C0 17.400 2.900 17.200 2.900 17.200 H5 V14.500 C5 14.500 4.900 11.600 7.800 11.600 H13.400 C13.400 11.600 16.100 11.700 16.100 9 V3.200 C16.100 3.200 16.500 0 11 0 Z"/>
<path fill="#f2f2f2" stroke="#f2f2f2" stroke-width="3" d="M11.300 22.500 C16.800 22.500 16.400 20.100 16.400 20.100 V16.700 H11.200 V15.700 H19 C19 15.700 22.500 16.100 22.500 10.600 C22.500 5.200 19.400 5.400 19.400 5.400 H17.600 V7.900 C17.600 7.900 17.700 11 14.600 11 H9.200 C9.200 11 6.300 10.900 6.300 13.800 V19.200 C6.300 19.200 5.900 22.500 11.300 22.500 Z"/>
<path fill="#3d9ad6" d="M11 0 C5 0 5.500 2.600 5.500 2.600 V6 H11.200 V7 H3.300 C3.300 7 0 6.600 0 12 C0 17.400 2.900 17.200 2.900 17.200 H5 V14.500 C5 14.500 4.900 11.600 7.800 11.600 H13.400 C13.400 11.600 16.100 11.700 16.100 9 V3.200 C16.100 3.200 16.500 0 11 0 Z"/>
<path fill="#f5c83c" d="M11.300 22.500 C16.800 22.500 16.400 20.100 16.400 20.100 V16.700 H11.200 V15.700 H19 C19 15.700 22.500 16.100 22.500 10.600 C22.500 5.200 19.400 5.400 19.400 5.400 H17.600 V7.900 C17.600 7.900 17.700 11 14.600 11 H9.200 C9.200 11 6.300 10.900 6.300 13.800 V19.200 C6.300 19.200 5.900 22.500 11.300 22.500 Z"/>
<circle cx="8" cy="3" r="1.100" fill="#f2f2f2"/><circle cx="14.500" cy="19.600" r="1.100" fill="#f2f2f2"/>
</g></svg>
<span class="t" style="left:1346.9px;top:225.4px;font:400 22px/22px 'DejaVu Sans','Liberation Sans',sans-serif;color:#000;letter-spacing:-1.12px;">inflammation-analysis.py</span>
<svg style="left:1615px;top:229px;" width="15" height="15" viewBox="0 0 15 15"><path d="M1 1 L14 14 M14 1 L1 14" stroke="#9a9a9a" stroke-width="2" fill="none"/></svg>
<div style="left:1062px;top:264px;width:1486px;height:56px;background:#f2f2f2;"></div>
<div style="left:1062px;top:264px;width:643px;height:56px;background:#fff;"></div>
<div style="left:1062px;top:320px;width:1486px;height:2px;background:#d1d1d1;"></div>
<div style="left:1542px;top:268px;width:2px;height:50px;background:#d1d1d1;"></div>
<div style="left:1704px;top:264px;width:2px;height:56px;background:#d9d9d9;"></div>
<svg style="left:1069px;top:279px;" width="26" height="26" viewBox="0 0 28 28"><circle cx="11.500" cy="11.500" r="8.500" fill="none" stroke="#7f868c" stroke-width="2.2"/><path d="M17.800 17.800 L26 26" stroke="#7f868c" stroke-width="2.8000000000000003" stroke-linecap="round"/></svg>
<svg style="left:1091px;top:287px;" width="11" height="7" viewBox="0 0 11 7"><path fill="#7f7f7f" d="M0 0 H11 L5.500 6.500 Z"/></svg>
<span class="t" style="left:1114.8px;top:280.0px;font:400 26px/26px 'DejaVu Sans','Liberation Sans',sans-serif;color:#000;letter-spacing:-1.27px;">args</span>
<svg style="left:1459px;top:283px;" width="15" height="15" viewBox="0 0 15 15"><path d="M1 1 L14 14 M14 1 L1 14" stroke="#9a9a9a" stroke-width="2" fill="none"/></svg>
<svg style="left:1497px;top:279px;" width="26" height="24" viewBox="0 0 26 24"><path d="M2 3 H16 A6 6 0 0 1 16 16 H8" fill="none" stroke="#a9a9a9" stroke-width="2.400"/><path fill="#a9a9a9" d="M10.500 9.500 V22.500 L2 16 Z"/></svg>
<span class="t" style="left:1561.0px;top:279.0px;font:700 26.0px/26.0px 'Liberation Sans','DejaVu Sans',sans-serif;color:#b3bcc4;letter-spacing:-2.40px;">Cc</span>
<span class="t" style="left:1614.6px;top:279.0px;font:700 26.0px/26.0px 'Liberation Sans','DejaVu Sans',sans-serif;color:#b3bcc4;letter-spacing:0.40px;">W</span>
<span class="t" style="left:1668.0px;top:279.0px;font:700 26.0px/26.0px 'Liberation Sans','DejaVu Sans',sans-serif;color:#b3bcc4;letter-spacing:5.00px;">.*</span>
<span class="t" style="left:1788.4px;top:280.9px;font:400 23px/23px 'Liberation Sans','DejaVu Sans',sans-serif;color:#1a1a1a;letter-spacing:-2.20px;">1/7</span>
<svg style="left:1898px;top:280px;" width="20" height="24" viewBox="0 0 20 24"><path d="M10.0 24 V3 M1.500 11.5 L10.0 2.500 L18.5 11.5" fill="none" stroke="#747474" stroke-width="3.6"/></svg>
<svg style="left:1950px;top:280px;" width="20" height="24" viewBox="0 0 20 24"><path d="M10.0 0 V21 M1.500 12.5 L10.0 21.5 L18.5 12.5" fill="none" stroke="#747474" stroke-width="3.6"/></svg>
<svg style="left:1999px;top:280px;" width="25" height="24" viewBox="0 0 25 24"><rect x="1.250" y="1.250" width="22.500" height="21.500" fill="none" stroke="#747474" stroke-width="2.500"/><rect x="1" y="15.500" width="14" height="8" fill="#747474"/></svg>
<div style="left:2044px;top:272px;width:2px;height:42px;background:#c9c9c9;"></div>
<div style="left:2214px;top:272px;width:2px;height:42px;background:#c9c9c9;"></div>
<svg style="left:2063px;top:276px;" width="34" height="32" viewBox="0 0 34 32"><path d="M0 10 H19 M9.500 0.500 V19.500" stroke="#747474" stroke-width="3.400"/><g stroke="#747474" stroke-width="1.600" fill="none"><path d="M21 17 V30 M18 17 H24 M18 30 H24"/><path d="M29 17 V30 M26 17 H32 M26 30 H32"/></g></svg>
<svg style="left:2116px;top:276px;" width="34" height="32" viewBox="0 0 34 32"><path d="M0 10 H19" stroke="#747474" stroke-width="3.400"/><g stroke="#747474" stroke-width="1.600" fill="none"><path d="M21 17 V30 M18 17 H24 M18 30 H24"/><path d="M29 17 V30 M26 17 H32 M26 30 H32"/></g></svg>
<svg style="left:2165px;top:276px;" width="36" height="32" viewBox="0 0 36 32"><rect x="1" y="3" width="15" height="14" fill="none" stroke="#747474" stroke-width="2"/><path d="M4.500 9 L8.500 13 L18 1.500" fill="none" stroke="#747474" stroke-width="2.600"/><g stroke="#747474" stroke-width="1.600" fill="none"><path d="M23 17 V30 M20 17 H26 M20 30 H26"/><path d="M31 17 V30 M28 17 H34 M28 30 H34"/></g></svg>
<svg style="left:2235px;top:281px;" width="28" height="26" viewBox="0 0 28 26"><g stroke="#747474" stroke-width="3.600"><path d="M0 2 H23 M0 10.500 H12.500 M0 19 H12.500"/></g><path d="M21.500 11 V24 M17.500 11 H25.500 M17.500 24 H25.500" stroke="#747474" stroke-width="2" fill="none"/></svg>
<svg style="left:2284px;top:280px;" width="25" height="24" viewBox="0 0 25 24"><path fill="#747474" d="M0 0 H25 L16.500 11 V24 H8.500 V11 Z"/></svg>
<div style="left:1062px;top:322px;width:1486px;height:862px;background:#fff;"></div>
<div style="left:1062px;top:322px;width:116px;height:862px;background:#f2f2f2;"></div>
<div style="left:1177px;top:322px;width:2px;height:862px;background:#d2d2d2;"></div>
<div style="left:1062px;top:532px;width:1486px;height:44px;background:#fcfaed;"></div>
<div style="left:1062px;top:532px;width:116px;height:44px;background:#fbf9ec;"></div>
<div style="left:1177px;top:532px;width:2px;height:44px;background:#d2d2d2;"></div>
<div style="left:1062px;top:322px;width:1486px;height:862px;overflow:hidden;">
<span class="t" style="position:absolute;left:-42px;top:-8px;width:80px;text-align:right;font:400 24px/44px 'DejaVu Sans Mono','Liberation Mono',monospace;color:#a9a9a9;">3</span>
<span class="t" style="position:absolute;left:-42px;top:36px;width:80px;text-align:right;font:400 24px/44px 'DejaVu Sans Mono','Liberation Mono',monospace;color:#a9a9a9;">4</span>
<span class="t" style="position:absolute;left:128px;top:35px;font:400 26.58px/44px 'DejaVu Sans Mono','Liberation Mono',monospace;color:#000;"><span class="k">import</span> argparse</span>
<span class="t" style="position:absolute;left:-42px;top:80px;width:80px;text-align:right;font:400 24px/44px 'DejaVu Sans Mono','Liberation Mono',monospace;color:#a9a9a9;">5</span>
<span class="t" style="position:absolute;left:-42px;top:124px;width:80px;text-align:right;font:400 24px/44px 'DejaVu Sans Mono','Liberation Mono',monospace;color:#a9a9a9;">6</span>
<span class="t" style="position:absolute;left:128px;top:123px;font:400 26.58px/44px 'DejaVu Sans Mono','Liberation Mono',monospace;color:#000;"><span class="k">from</span> inflammation <span class="k">import</span> models, views</span>
<span class="t" style="position:absolute;left:-42px;top:168px;width:80px;text-align:right;font:400 24px/44px 'DejaVu Sans Mono','Liberation Mono',monospace;color:#a9a9a9;">7</span>
<span class="t" style="position:absolute;left:-42px;top:212px;width:80px;text-align:right;font:400 24px/44px 'DejaVu Sans Mono','Liberation Mono',monospace;color:#a9a9a9;">8</span>
<div style="left:272px;top:254px;width:64px;height:44px;background:#ffe95a;box-shadow:inset 0 0 0 2px #111;"></div>
<span class="t" style="position:absolute;left:-42px;top:256px;width:80px;text-align:right;font:400 24px/44px 'DejaVu Sans Mono','Liberation Mono',monospace;color:#a9a9a9;">9</span>
<span class="t" style="position:absolute;left:128px;top:255px;font:400 26.58px/44px 'DejaVu Sans Mono','Liberation Mono',monospace;color:#000;"><span class="k">def</span> main(<span class="wv">args</span>):</span>
<span class="t" style="position:absolute;left:-42px;top:300px;width:80px;text-align:right;font:400 24px/44px 'DejaVu Sans Mono','Liberation Mono',monospace;color:#a9a9a9;">10</span>
<span class="t" style="position:absolute;left:128px;top:299px;font:400 26.58px/44px 'DejaVu Sans Mono','Liberation Mono',monospace;color:#000;">    <span class="c">"""The MVC Controller of the patient inflammation data system.</span></span>
<span class="t" style="position:absolute;left:-42px;top:344px;width:80px;text-align:right;font:400 24px/44px 'DejaVu Sans Mono','Liberation Mono',monospace;color:#a9a9a9;">11</span>
<span class="t" style="position:absolute;left:-42px;top:388px;width:80px;text-align:right;font:400 24px/44px 'DejaVu Sans Mono','Liberation Mono',monospace;color:#a9a9a9;">12</span>
<span class="t" style="position:absolute;left:128px;top:387px;font:400 26.58px/44px 'DejaVu Sans Mono','Liberation Mono',monospace;color:#000;">    <span class="c">The Controller is responsible for:</span></span>
<span class="t" style="position:absolute;left:-42px;top:432px;width:80px;text-align:right;font:400 24px/44px 'DejaVu Sans Mono','Liberation Mono',monospace;color:#a9a9a9;">13</span>
<span class="t" style="position:absolute;left:128px;top:431px;font:400 26.58px/44px 'DejaVu Sans Mono','Liberation Mono',monospace;color:#000;">    <span class="c">- selecting the necessary models and views for the current task</span></span>
<span class="t" style="position:absolute;left:-42px;top:476px;width:80px;text-align:right;font:400 24px/44px 'DejaVu Sans Mono','Liberation Mono',monospace;color:#a9a9a9;">14</span>
<span class="t" style="position:absolute;left:128px;top:475px;font:400 26.58px/44px 'DejaVu Sans Mono','Liberation Mono',monospace;color:#000;">    <span class="c">- passing data between models and views</span></span>
<span class="t" style="position:absolute;left:-42px;top:520px;width:80px;text-align:right;font:400 24px/44px 'DejaVu Sans Mono','Liberation Mono',monospace;color:#a9a9a9;">15</span>
<span class="t" style="position:absolute;left:128px;top:519px;font:400 26.58px/44px 'DejaVu Sans Mono','Liberation Mono',monospace;color:#000;">    <span class="c">"""</span></span>
<div style="left:352px;top:562px;width:64px;height:44px;background:#ffe95a;"></div>
<span class="t" style="position:absolute;left:-42px;top:564px;width:80px;text-align:right;font:400 24px/44px 'DejaVu Sans Mono','Liberation Mono',monospace;color:#a9a9a9;">16</span>
<span class="t" style="position:absolute;left:128px;top:563px;font:400 26.58px/44px 'DejaVu Sans Mono','Liberation Mono',monospace;color:#000;">    <span class="wv">InFiles</span> = args.infiles</span>
<span class="t" style="position:absolute;left:-42px;top:608px;width:80px;text-align:right;font:400 24px/44px 'DejaVu Sans Mono','Liberation Mono',monospace;color:#a9a9a9;">17</span>
<span class="t" style="position:absolute;left:128px;top:607px;font:400 26.58px/44px 'DejaVu Sans Mono','Liberation Mono',monospace;color:#000;">    <span class="k">if not</span> <span class="b">isinstance</span>(InFiles, <span class="b">list</span>):</span>
<div style="left:432px;top:650px;width:64px;height:44px;background:#ffe95a;"></div>
<span class="t" style="position:absolute;left:-42px;top:652px;width:80px;text-align:right;font:400 24px/44px 'DejaVu Sans Mono','Liberation Mono',monospace;color:#a9a9a9;">18</span>
<span class="t" style="position:absolute;left:128px;top:651px;font:400 26.58px/44px 'DejaVu Sans Mono','Liberation Mono',monospace;color:#000;">        <span class="wv">InFiles</span> = [args.infiles]</span>
<span class="t" style="position:absolute;left:-42px;top:696px;width:80px;text-align:right;font:400 24px/44px 'DejaVu Sans Mono','Liberation Mono',monospace;color:#a9a9a9;">19</span>
<span class="t" style="position:absolute;left:-42px;top:740px;width:80px;text-align:right;font:400 24px/44px 'DejaVu Sans Mono','Liberation Mono',monospace;color:#a9a9a9;">20</span>
<span class="t" style="position:absolute;left:-42px;top:784px;width:80px;text-align:right;font:400 24px/44px 'DejaVu Sans Mono','Liberation Mono',monospace;color:#a9a9a9;">21</span>
<span class="t" style="position:absolute;left:128px;top:783px;font:400 26.58px/44px 'DejaVu Sans Mono','Liberation Mono',monospace;color:#000;">    <span class="wv"><span class="k">for</span> filename <span class="k">in</span> InFiles:</span></span>
<span class="t" style="position:absolute;left:-42px;top:828px;width:80px;text-align:right;font:400 24px/44px 'DejaVu Sans Mono','Liberation Mono',monospace;color:#a9a9a9;">22</span>
<span class="t" style="position:absolute;left:128px;top:827px;font:400 26.58px/44px 'DejaVu Sans Mono','Liberation Mono',monospace;color:#000;">        inflammation<span class="u">_</span>data = models.load<span class="u">_</span>csv(filename)</span>
<div style="left:188px;top:650px;width:2px;height:44px;background:#e3e3e3"></div>
<div style="left:188px;top:826px;width:2px;height:44px;background:#e3e3e3"></div>
<svg style="left:107px;top:49px" width="18" height="23" viewBox="0 0 18 23"><path d="M1 1 H17 V14 L9 22 L1 14 Z" fill="#fff" stroke="#c6c6c6" stroke-width="1.600"/><path d="M4.500 8 H13.500" stroke="#b4b4b4" stroke-width="1.600"/></svg>
<svg style="left:107px;top:132px" width="18" height="23" viewBox="0 0 18 23"><path d="M1 22 H17 V9 L9 1 L1 9 Z" fill="#fff" stroke="#c6c6c6" stroke-width="1.600"/><path d="M4.500 15 H13.500" stroke="#b4b4b4" stroke-width="1.600"/></svg>
<svg style="left:107px;top:269px" width="18" height="23" viewBox="0 0 18 23"><path d="M1 1 H17 V14 L9 22 L1 14 Z" fill="#fff" stroke="#c6c6c6" stroke-width="1.600"/><path d="M4.500 8 H13.500" stroke="#b4b4b4" stroke-width="1.600"/></svg>
<svg style="left:107px;top:313px" width="18" height="23" viewBox="0 0 18 23"><path d="M1 1 H17 V14 L9 22 L1 14 Z" fill="#fff" stroke="#c6c6c6" stroke-width="1.600"/><path d="M4.500 8 H13.500" stroke="#b4b4b4" stroke-width="1.600"/></svg>
<svg style="left:107px;top:528px" width="18" height="23" viewBox="0 0 18 23"><path d="M1 22 H17 V9 L9 1 L1 9 Z" fill="#fff" stroke="#c6c6c6" stroke-width="1.600"/><path d="M4.500 15 H13.500" stroke="#b4b4b4" stroke-width="1.600"/></svg>
<svg style="left:107px;top:797px" width="18" height="23" viewBox="0 0 18 23"><path d="M1 1 H17 V14 L9 22 L1 14 Z" fill="#fff" stroke="#c6c6c6" stroke-width="1.600"/><path d="M4.500 8 H13.500" stroke="#b4b4b4" stroke-width="1.600"/></svg>
</div>
<div style="left:1062px;top:1184px;width:1486px;height:2px;background:#d1d1d1;"></div>
<div style="left:1062px;top:1186px;width:1486px;height:44px;background:#f2f2f2;"></div>
<div style="left:42px;top:1223px;width:1018px;height:6px;background:#fff;"></div>
<div style="left:42px;top:1229px;width:2506px;height:2px;background:#c9c9c9;"></div>
<div style="left:42px;top:1231px;width:2506px;height:52px;background:#e4e7ef;"></div>
<div style="left:42px;top:1282px;width:2506px;height:2px;background:#cfd2da;"></div>
<div style="left:124px;top:1278px;width:352px;height:6px;background:#3d7dcc;"></div>
<span class="t" style="left:55.0px;top:1245.9px;font:400 24px/24px 'DejaVu Sans','Liberation Sans',sans-serif;color:#000;letter-spacing:-0.75px;">Find:</span>
<span class="t" style="left:148.6px;top:1245.9px;font:400 24px/24px 'DejaVu Sans','Liberation Sans',sans-serif;color:#000;letter-spacing:-0.53px;">Occurrences of 'patient'</span>
<svg style="left:439px;top:1251px;" width="15" height="15" viewBox="0 0 15 15"><path d="M1 1 L14 14 M14 1 L1 14" stroke="#9a9a9a" stroke-width="2" fill="none"/></svg>
<div style="left:2515px;top:1254px;width:24px;height:4px;background:#747474;"></div>
<div style="left:42px;top:1284px;width:57px;height:536px;background:#f2f2f2;"></div>
<div style="left:98.5px;top:1284px;width:1.5px;height:536px;background:#d1d1d1;"></div>
<svg style="left:57px;top:1301px;" width="26" height="26" viewBox="0 0 26 26"><path d="M22.500 10 A10 10 0 0 0 4.500 7.500" fill="none" stroke="#747474" stroke-width="3.900"/><path fill="#747474" d="M1 2.500 V11.500 H10 Z"/><path d="M3.500 16 A10 10 0 0 0 21.500 18.500" fill="none" stroke="#747474" stroke-width="3.900"/><path fill="#747474" d="M25 23.500 V14.500 H16 Z"/></svg>
<svg style="left:60px;top:1354px;" width="20" height="24" viewBox="0 0 20 24"><path d="M10.0 24 V3 M1.500 11.5 L10.0 2.500 L18.5 11.5" fill="none" stroke="#747474" stroke-width="3.6"/></svg>
<svg style="left:60px;top:1406px;" width="20" height="24" viewBox="0 0 20 24"><path d="M10.0 0 V21 M1.500 12.5 L10.0 21.5 L18.5 12.5" fill="none" stroke="#747474" stroke-width="3.6"/></svg>
<div style="left:50px;top:1450px;width:40px;height:2px;background:#d1d1d1;"></div>
<svg style="left:60px;top:1474px;" width="28" height="28" viewBox="0 0 28 28"><g fill="#747474"><rect x="0" y="0" width="8.500" height="8.500"/><rect x="11.500" y="0" width="8.500" height="8.500"/><rect x="0" y="11.500" width="8.500" height="8.500"/><rect x="11.500" y="11.500" width="8.500" height="8.500"/><path d="M15.500 21.500 H27.500 L21.500 27.500 Z" fill="#333"/></g></svg>
<svg style="left:58px;top:1522px;" width="24" height="28" viewBox="0 0 24 28"><g fill="#747474"><rect x="0" y="0" width="24" height="4"/><rect x="0" y="24" width="24" height="4"/><path d="M12 6 L18.700 12 H5.300 Z"/><path d="M12 22 L18.700 16 H5.300 Z"/></g></svg>
<svg style="left:58px;top:1575px;" width="24" height="24" viewBox="0 0 24 24"><g fill="#747474"><rect x="0" y="10" width="24" height="4"/><path d="M12 7 L18.800 0 H5.200 Z"/><path d="M12 17 L18.800 24 H5.200 Z"/></g></svg>
<div style="left:50px;top:1620px;width:40px;height:2px;background:#d1d1d1;"></div>
<div style="left:48px;top:1632px;width:44px;height:43px;background:#cfcfcf;border-radius:5px;"></div>
<svg style="left:58px;top:1641px;" width="25" height="25" viewBox="0 0 25 25"><rect x="0" y="0" width="25" height="25" fill="#747474"/><rect x="3.500" y="3.500" width="9" height="18" fill="#cfcfcf"/></svg>
<div style="left:50px;top:1686px;width:40px;height:2px;background:#d1d1d1;"></div>
<svg style="left:57px;top:1707px;" width="26" height="26" viewBox="0 0 26 26"><path fill="#747474" fill-rule="evenodd" stroke="#747474" stroke-width="1" stroke-linejoin="round" d="M9.99 4.20 L10.42 0.87 L15.58 0.87 L16.01 4.20 L19.11 5.99 L22.21 4.70 L24.80 9.17 L22.13 11.21 L22.13 14.79 L24.80 16.83 L22.21 21.30 L19.11 20.01 L16.01 21.80 L15.58 25.13 L10.42 25.13 L9.99 21.80 L6.89 20.01 L3.79 21.30 L1.20 16.83 L3.87 14.79 L3.87 11.21 L1.20 9.17 L3.79 4.70 L6.89 5.99 Z M13 8.200 a4.800 4.800 0 1 0 0.010 0 Z"/></svg>
<div style="left:100px;top:1284px;width:1078px;height:536px;background:#fff;"></div>
<div style="left:100px;top:1564px;width:1078px;height:39.5px;background:#2f70bf;"></div>
<svg style="left:113px;top:1296.6px;" width="20" height="14" viewBox="0 0 20 14"><path d="M2 2 L10 10.500 L18 2" fill="none" stroke="#747474" stroke-width="2.900"/></svg>
<span class="t" style="left:151.0px;top:1292.1px;font:700 27.0px/27.0px 'Liberation Sans','DejaVu Sans',sans-serif;color:#000;letter-spacing:0.17px;">Targets</span>
<svg style="left:186px;top:1330.1px;" width="28" height="28" viewBox="0 0 28 28"><circle cx="11.500" cy="11.500" r="8.500" fill="none" stroke="#747474" stroke-width="3.4"/><path d="M17.800 17.800 L26 26" stroke="#747474" stroke-width="4.0" stroke-linecap="round"/></svg>
<span class="t" style="left:223.0px;top:1332.1px;font:400 26px/26px 'DejaVu Sans','Liberation Sans',sans-serif;color:#000;letter-spacing:-0.44px;">Occurrences of 'patient' in Project</span>
<svg style="left:113px;top:1376.6px;" width="20" height="14" viewBox="0 0 20 14"><path d="M2 2 L10 10.500 L18 2" fill="none" stroke="#747474" stroke-width="2.900"/></svg>
<span class="t" style="left:151.0px;top:1372.1px;font:700 27.0px/27.0px 'Liberation Sans','DejaVu Sans',sans-serif;color:#000;letter-spacing:0.04px;">Found Occurrences</span>
<span class="t" style="left:418.8px;top:1372.1px;font:700 27.0px/27.0px 'Liberation Sans','DejaVu Sans',sans-serif;color:#8c8c8c;letter-spacing:0.33px;">14 results</span>
<svg style="left:152.5px;top:1413.6px;" width="14" height="20" viewBox="0 0 14 20"><path d="M2 2 L10.500 10 L2 18" fill="none" stroke="#747474" stroke-width="2.900"/></svg>
<svg style="left:190px;top:1409.6px;" width="28" height="30" viewBox="0 0 28 30"><path fill="#a7b2bb" d="M8.500 0 H20 V27 H0 V8.500 H8.500 Z"/><path fill="#a7b2bb" opacity="0.7" d="M0 7 L7 0 V7 Z"/>
<g transform="translate(7.600,10.700) scale(0.845)">
<path fill="#f2f2f2" stroke="#f2f2f2" stroke-width="4" d="M11 0 C5 0 5.500 2.600 5.500 2.600 V6 H11.200 V7 H3.300 C3.300 7 0 6.600 0 12 C0 17.400 2.900 17.200 2.900 17.200 H5 V14.500 C5 14.500 4.900 11.600 7.800 11.600 H13.400 C13.400 11.600 16.100 11.700 16.100 9 V3.200 C16.100 3.200 16.500 0 11 0 Z"/>
<path fill="#f2f2f2" stroke="#f2f2f2" stroke-width="3" d="M11.300 22.500 C16.800 22.500 16.400 20.100 16.400 20.100 V16.700 H11.200 V15.700 H19 C19 15.700 22.500 16.100 22.500 10.600 C22.500 5.200 19.400 5.400 19.400 5.400 H17.600 V7.900 C17.600 7.900 17.700 11 14.600 11 H9.200 C9.200 11 6.300 10.900 6.300 13.800 V19.200 C6.300 19.200 5.900 22.500 11.300 22.500 Z"/>
<path fill="#3d9ad6" d="M11 0 C5 0 5.500 2.600 5.500 2.600 V6 H11.200 V7 H3.300 C3.300 7 0 6.600 0 12 C0 17.400 2.900 17.200 2.900 17.200 H5 V14.500 C5 14.500 4.900 11.600 7.800 11.600 H13.400 C13.400 11.600 16.100 11.700 16.100 9 V3.200 C16.100 3.200 16.500 0 11 0 Z"/>
<path fill="#f5c83c" d="M11.300 22.500 C16.800 22.500 16.400 20.100 16.400 20.100 V16.700 H11.200 V15.700 H19 C19 15.700 22.500 16.100 22.500 10.600 C22.500 5.200 19.400 5.400 19.400 5.400 H17.600 V7.900 C17.600 7.900 17.700 11 14.600 11 H9.200 C9.200 11 6.300 10.900 6.300 13.800 V19.200 C6.300 19.200 5.900 22.500 11.300 22.500 Z"/>
<circle cx="8" cy="3" r="1.100" fill="#f2f2f2"/><circle cx="14.500" cy="19.600" r="1.100" fill="#f2f2f2"/>
</g></svg>
<span class="t" style="left:223.0px;top:1412.1px;font:400 26px/26px 'DejaVu Sans','Liberation Sans',sans-serif;color:#000;letter-spacing:0.23px;">__init__.py</span>
<span class="t" style="left:370.4px;top:1412.1px;font:400 26px/26px 'DejaVu Sans','Liberation Sans',sans-serif;color:#8c8c8c;letter-spacing:-1.24px;">1 result</span>
<svg style="left:149px;top:1456.6px;" width="20" height="14" viewBox="0 0 20 14"><path d="M2 2 L10 10.500 L18 2" fill="none" stroke="#747474" stroke-width="2.900"/></svg>
<svg style="left:190px;top:1449.6px;" width="28" height="30" viewBox="0 0 28 30"><path fill="#a7b2bb" d="M8.500 0 H20 V27 H0 V8.500 H8.500 Z"/><path fill="#a7b2bb" opacity="0.7" d="M0 7 L7 0 V7 Z"/>
<g transform="translate(7.600,10.700) scale(0.845)">
<path fill="#f2f2f2" stroke="#f2f2f2" stroke-width="4" d="M11 0 C5 0 5.500 2.600 5.500 2.600 V6 H11.200 V7 H3.300 C3.300 7 0 6.600 0 12 C0 17.400 2.900 17.200 2.900 17.200 H5 V14.500 C5 14.500 4.900 11.600 7.800 11.600 H13.400 C13.400 11.600 16.100 11.700 16.100 9 V3.200 C16.100 3.200 16.500 0 11 0 Z"/>
<path fill="#f2f2f2" stroke="#f2f2f2" stroke-width="3" d="M11.300 22.500 C16.800 22.500 16.400 20.100 16.400 20.100 V16.700 H11.200 V15.700 H19 C19 15.700 22.500 16.100 22.500 10.600 C22.500 5.200 19.400 5.400 19.400 5.400 H17.600 V7.900 C17.600 7.900 17.700 11 14.600 11 H9.200 C9.200 11 6.300 10.900 6.300 13.800 V19.200 C6.300 19.200 5.900 22.500 11.300 22.500 Z"/>
<path fill="#3d9ad6" d="M11 0 C5 0 5.500 2.600 5.500 2.600 V6 H11.200 V7 H3.300 C3.300 7 0 6.600 0 12 C0 17.400 2.900 17.200 2.900 17.200 H5 V14.500 C5 14.500 4.900 11.600 7.800 11.600 H13.400 C13.400 11.600 16.100 11.700 16.100 9 V3.200 C16.100 3.200 16.500 0 11 0 Z"/>
<path fill="#f5c83c" d="M11.300 22.500 C16.800 22.500 16.400 20.100 16.400 20.100 V16.700 H11.200 V15.700 H19 C19 15.700 22.500 16.100 22.500 10.600 C22.500 5.200 19.400 5.400 19.400 5.400 H17.600 V7.900 C17.600 7.900 17.700 11 14.600 11 H9.200 C9.200 11 6.300 10.900 6.300 13.800 V19.200 C6.300 19.200 5.900 22.500 11.300 22.500 Z"/>
<circle cx="8" cy="3" r="1.100" fill="#f2f2f2"/><circle cx="14.500" cy="19.600" r="1.100" fill="#f2f2f2"/>
</g></svg>
<span class="t" style="left:223.0px;top:1452.1px;font:400 26px/26px 'DejaVu Sans','Liberation Sans',sans-serif;color:#000;letter-spacing:-0.83px;">inflammation-analysis.py</span>
<span class="t" style="left:545.0px;top:1452.1px;font:400 26px/26px 'DejaVu Sans','Liberation Sans',sans-serif;color:#8c8c8c;letter-spacing:-0.69px;">4 results</span>
<div style="left:101px;top:1284px;width:1077px;height:536px;overflow:hidden;">
<span class="t" style="left:122.0px;top:208.1px;font:400 26px/26px 'DejaVu Sans','Liberation Sans',sans-serif;color:#8c8c8c;letter-spacing:-0.72px;">2 """Software for managing and analysing <b>patient</b>s' inflammation data in our</span>
</div>
<span class="t" style="left:223.0px;top:1532.1px;font:400 26px/26px 'DejaVu Sans','Liberation Sans',sans-serif;color:#8c8c8c;letter-spacing:-0.66px;">10 """The MVC Controller of the <b>patient</b> inflammation data system.</span>
<span class="t" style="left:223.0px;top:1572.1px;font:400 26px/26px 'DejaVu Sans','Liberation Sans',sans-serif;color:#fff;letter-spacing:-0.85px;">30 description='A basic <b>patient</b> inflammation data management system')</span>
<span class="t" style="left:223.0px;top:1612.1px;font:400 26px/26px 'DejaVu Sans','Liberation Sans',sans-serif;color:#000;letter-spacing:-0.68px;"><span style="color:#8c8c8c">35</span> help=<span style="color:#1f8a80">'Input CSV(s) containing inflammation series for each <b>patient</b>'</span>)</span>
<svg style="left:152.5px;top:1653.6px;" width="14" height="20" viewBox="0 0 14 20"><path d="M2 2 L10.500 10 L2 18" fill="none" stroke="#747474" stroke-width="2.900"/></svg>
<svg style="left:190px;top:1649.6px;" width="28" height="30" viewBox="0 0 28 30"><path fill="#a7b2bb" d="M8.500 0 H20 V27 H0 V8.500 H8.500 Z"/><path fill="#a7b2bb" opacity="0.7" d="M0 7 L7 0 V7 Z"/>
<g transform="translate(7.600,10.700) scale(0.845)">
<path fill="#f2f2f2" stroke="#f2f2f2" stroke-width="4" d="M11 0 C5 0 5.500 2.600 5.500 2.600 V6 H11.200 V7 H3.300 C3.300 7 0 6.600 0 12 C0 17.400 2.900 17.200 2.900 17.200 H5 V14.500 C5 14.500 4.900 11.600 7.800 11.600 H13.400 C13.400 11.600 16.100 11.700 16.100 9 V3.200 C16.100 3.200 16.500 0 11 0 Z"/>
<path fill="#f2f2f2" stroke="#f2f2f2" stroke-width="3" d="M11.300 22.500 C16.800 22.500 16.400 20.100 16.400 20.100 V16.700 H11.200 V15.700 H19 C19 15.700 22.500 16.100 22.500 10.600 C22.500 5.200 19.400 5.400 19.400 5.400 H17.600 V7.900 C17.600 7.900 17.700 11 14.600 11 H9.200 C9.200 11 6.300 10.900 6.300 13.800 V19.200 C6.300 19.200 5.900 22.500 11.300 22.500 Z"/>
<path fill="#3d9ad6" d="M11 0 C5 0 5.500 2.600 5.500 2.600 V6 H11.200 V7 H3.300 C3.300 7 0 6.600 0 12 C0 17.400 2.900 17.200 2.900 17.200 H5 V14.500 C5 14.500 4.900 11.600 7.800 11.600 H13.400 C13.400 11.600 16.100 11.700 16.100 9 V3.200 C16.100 3.200 16.500 0 11 0 Z"/>
<path fill="#f5c83c" d="M11.300 22.500 C16.800 22.500 16.400 20.100 16.400 20.100 V16.700 H11.200 V15.700 H19 C19 15.700 22.500 16.100 22.500 10.600 C22.500 5.200 19.400 5.400 19.400 5.400 H17.600 V7.900 C17.600 7.900 17.700 11 14.600 11 H9.200 C9.200 11 6.300 10.900 6.300 13.800 V19.200 C6.300 19.200 5.900 22.500 11.300 22.500 Z"/>
<circle cx="8" cy="3" r="1.100" fill="#f2f2f2"/><circle cx="14.500" cy="19.600" r="1.100" fill="#f2f2f2"/>
</g></svg>
<span class="t" style="left:223.0px;top:1652.1px;font:400 26px/26px 'DejaVu Sans','Liberation Sans',sans-serif;color:#000;letter-spacing:-1.12px;">models.py</span>
<span class="t" style="left:363.0px;top:1652.1px;font:400 26px/26px 'DejaVu Sans','Liberation Sans',sans-serif;color:#8c8c8c;letter-spacing:-0.75px;">5 results</span>
<svg style="left:152.5px;top:1693.6px;" width="14" height="20" viewBox="0 0 14 20"><path d="M2 2 L10.500 10 L2 18" fill="none" stroke="#747474" stroke-width="2.900"/></svg>
<svg style="left:190px;top:1689.6px;" width="28" height="30" viewBox="0 0 28 30"><path fill="#a7b2bb" d="M8.500 0 H20 V27 H0 V8.500 H8.500 Z"/><path fill="#a7b2bb" opacity="0.7" d="M0 7 L7 0 V7 Z"/>
<g transform="translate(7.600,10.700) scale(0.845)">
<path fill="#f2f2f2" stroke="#f2f2f2" stroke-width="4" d="M11 0 C5 0 5.500 2.600 5.500 2.600 V6 H11.200 V7 H3.300 C3.300 7 0 6.600 0 12 C0 17.400 2.900 17.200 2.900 17.200 H5 V14.500 C5 14.500 4.900 11.600 7.800 11.600 H13.400 C13.400 11.600 16.100 11.700 16.100 9 V3.200 C16.100 3.200 16.500 0 11 0 Z"/>
<path fill="#f2f2f2" stroke="#f2f2f2" stroke-width="3" d="M11.300 22.500 C16.800 22.500 16.400 20.100 16.400 20.100 V16.700 H11.200 V15.700 H19 C19 15.700 22.500 16.100 22.500 10.600 C22.500 5.200 19.400 5.400 19.400 5.400 H17.600 V7.900 C17.600 7.900 17.700 11 14.600 11 H9.200 C9.200 11 6.300 10.900 6.300 13.800 V19.200 C6.300 19.200 5.900 22.500 11.300 22.500 Z"/>
<path fill="#3d9ad6" d="M11 0 C5 0 5.500 2.600 5.500 2.600 V6 H11.200 V7 H3.300 C3.300 7 0 6.600 0 12 C0 17.400 2.900 17.200 2.900 17.200 H5 V14.500 C5 14.500 4.900 11.600 7.800 11.600 H13.400 C13.400 11.600 16.100 11.700 16.100 9 V3.200 C16.100 3.200 16.500 0 11 0 Z"/>
<path fill="#f5c83c" d="M11.300 22.500 C16.800 22.500 16.400 20.100 16.400 20.100 V16.700 H11.200 V15.700 H19 C19 15.700 22.500 16.100 22.500 10.600 C22.500 5.200 19.400 5.400 19.400 5.400 H17.600 V7.900 C17.600 7.900 17.700 11 14.600 11 H9.200 C9.200 11 6.300 10.900 6.300 13.800 V19.200 C6.300 19.200 5.900 22.500 11.300 22.500 Z"/>
<circle cx="8" cy="3" r="1.100" fill="#f2f2f2"/><circle cx="14.500" cy="19.600" r="1.100" fill="#f2f2f2"/>
</g></svg>
<span class="t" style="left:223.0px;top:1692.1px;font:400 26px/26px 'DejaVu Sans','Liberation Sans',sans-serif;color:#000;letter-spacing:-0.71px;">test_patient.py</span>
<span class="t" style="left:422.8px;top:1692.1px;font:400 26px/26px 'DejaVu Sans','Liberation Sans',sans-serif;color:#8c8c8c;letter-spacing:-0.82px;">4 results</span>
<div style="left:1178px;top:1284px;width:2px;height:536px;background:#d1d1d1;"></div>
<div style="left:1180px;top:1284px;width:1368px;height:536px;background:#fff;"></div>
<div style="left:1180px;top:1284px;width:96px;height:536px;background:#f2f2f2;"></div>
<div style="left:1180px;top:1463px;width:1368px;height:43px;background:#fcfaed;"></div>
<div style="left:1180px;top:1463px;width:96px;height:43px;background:#fbf9ec;"></div>
<div style="left:1180px;top:1284px;width:1368px;height:536px;overflow:hidden;">
<span class="t" style="position:absolute;left:-41.5px;top:5px;width:80px;text-align:right;font:400 24px/44px 'DejaVu Sans Mono','Liberation Mono',monospace;color:#a9a9a9;">26</span>
<span class="t" style="position:absolute;left:97px;top:4px;font:400 26.58px/44px 'DejaVu Sans Mono','Liberation Mono',monospace;color:#000;">        views.visualize(view<span class="u">_</span>data)</span>
<span class="t" style="position:absolute;left:-41.5px;top:49px;width:80px;text-align:right;font:400 24px/44px 'DejaVu Sans Mono','Liberation Mono',monospace;color:#a9a9a9;">27</span>
<span class="t" style="position:absolute;left:-41.5px;top:93px;width:80px;text-align:right;font:400 24px/44px 'DejaVu Sans Mono','Liberation Mono',monospace;color:#a9a9a9;">28</span>
<span class="t" style="position:absolute;left:97px;top:92px;font:400 26.58px/44px 'DejaVu Sans Mono','Liberation Mono',monospace;color:#000;"><span class="wv"><span class="k">if</span> <span class="u">_</span><span class="u">_</span>name<span class="u">_</span><span class="u">_</span> == <span class="s">"<span class="u">_</span><span class="u">_</span>main<span class="u">_</span><span class="u">_</span>"</span>:</span></span>
<span class="t" style="position:absolute;left:-41.5px;top:137px;width:80px;text-align:right;font:400 24px/44px 'DejaVu Sans Mono','Liberation Mono',monospace;color:#a9a9a9;">29</span>
<span class="t" style="position:absolute;left:97px;top:136px;font:400 26.58px/44px 'DejaVu Sans Mono','Liberation Mono',monospace;color:#000;">    parser = argparse.ArgumentParser(</span>
<div style="left:561px;top:179px;width:112px;height:43px;background:#c8c8f7;"></div>
<span class="t" style="position:absolute;left:-41.5px;top:181px;width:80px;text-align:right;font:400 24px/44px 'DejaVu Sans Mono','Liberation Mono',monospace;color:#a9a9a9;">30</span>
<span class="t" style="position:absolute;left:97px;top:180px;font:400 26.58px/44px 'DejaVu Sans Mono','Liberation Mono',monospace;color:#000;">        <span class="p">description</span>=<span class="s">'A basic patient inflammation data management system'</span>)</span>
<span class="t" style="position:absolute;left:-41.5px;top:225px;width:80px;text-align:right;font:400 24px/44px 'DejaVu Sans Mono','Liberation Mono',monospace;color:#a9a9a9;">31</span>
<span class="t" style="position:absolute;left:-41.5px;top:269px;width:80px;text-align:right;font:400 24px/44px 'DejaVu Sans Mono','Liberation Mono',monospace;color:#a9a9a9;">32</span>
<span class="t" style="position:absolute;left:97px;top:268px;font:400 26.58px/44px 'DejaVu Sans Mono','Liberation Mono',monospace;color:#000;">    parser.add<span class="u">_</span>argument(</span>
<span class="t" style="position:absolute;left:-41.5px;top:313px;width:80px;text-align:right;font:400 24px/44px 'DejaVu Sans Mono','Liberation Mono',monospace;color:#a9a9a9;">33</span>
<span class="t" style="position:absolute;left:97px;top:312px;font:400 26.58px/44px 'DejaVu Sans Mono','Liberation Mono',monospace;color:#000;">        <span class="s">'<span class="wg">infiles</span>'</span>,</span>
<span class="t" style="position:absolute;left:-41.5px;top:357px;width:80px;text-align:right;font:400 24px/44px 'DejaVu Sans Mono','Liberation Mono',monospace;color:#a9a9a9;">34</span>
<span class="t" style="position:absolute;left:97px;top:356px;font:400 26.58px/44px 'DejaVu Sans Mono','Liberation Mono',monospace;color:#000;">        <span class="p">nargs</span>=<span class="s">'+'</span>,</span>
<span class="t" style="position:absolute;left:-41.5px;top:401px;width:80px;text-align:right;font:400 24px/44px 'DejaVu Sans Mono','Liberation Mono',monospace;color:#a9a9a9;">35</span>
<span class="t" style="position:absolute;left:97px;top:400px;font:400 26.58px/44px 'DejaVu Sans Mono','Liberation Mono',monospace;color:#000;">        <span class="p">help</span>=<span class="s">'Input CSV(s) containing inflammation series for each patient'</span>)</span>
<span class="t" style="position:absolute;left:-41.5px;top:445px;width:80px;text-align:right;font:400 24px/44px 'DejaVu Sans Mono','Liberation Mono',monospace;color:#a9a9a9;">36</span>
<span class="t" style="position:absolute;left:-41.5px;top:489px;width:80px;text-align:right;font:400 24px/44px 'DejaVu Sans Mono','Liberation Mono',monospace;color:#a9a9a9;">37</span>
<span class="t" style="position:absolute;left:97px;top:488px;font:400 26.58px/44px 'DejaVu Sans Mono','Liberation Mono',monospace;color:#000;">    args = parser.parse<span class="u">_</span>args()</span>
<svg style="left:60px;top:102px" width="20" height="22"><path fill="#59a869" d="M1 0 L19 11 L1 22 Z"/></svg>
</div>
<div style="left:0px;top:1820px;width:2548px;height:2px;background:#d1d1d1;"></div>
<div style="left:0px;top:1822px;width:2548px;height:43px;background:#f2f2f2;"></div>
<div style="left:140px;top:1822px;width:114px;height:40px;background:#bdbdbd;"></div>
<svg style="left:62px;top:1832px;" width="22" height="22" viewBox="0 0 22 22"><g fill="#6e6e6e"><rect x="0" y="0" width="4" height="22"/><rect x="3" y="13" width="12.500" height="4"/><rect x="11.500" y="8" width="4" height="9"/><path d="M13.500 0 L21 9 H6 Z"/></g></svg>
<svg style="left:161px;top:1831px;" width="24" height="24" viewBox="0 0 28 28"><circle cx="11.500" cy="11.500" r="8.500" fill="none" stroke="#6e6e6e" stroke-width="3.9"/><path d="M17.800 17.800 L26 26" stroke="#6e6e6e" stroke-width="4.5" stroke-linecap="round"/></svg>
<svg style="left:278px;top:1833px;" width="21" height="19" viewBox="0 0 21 19"><g fill="#6e6e6e"><rect x="0" y="0" width="3.500" height="3.500"/><rect x="6" y="0" width="15" height="3.500"/><rect x="0" y="7.500" width="3.500" height="3.500"/><rect x="6" y="7.500" width="15" height="3.500"/><rect x="0" y="15" width="3.500" height="3.500"/><rect x="6" y="15" width="15" height="3.500"/></g></svg>
<svg style="left:413px;top:1832px;" width="21" height="21" viewBox="0 0 21 21"><circle cx="10.500" cy="10.500" r="10.500" fill="#6e6e6e"/><rect x="9" y="4.500" width="3" height="8" fill="#f2f2f2"/><rect x="9" y="14.500" width="3" height="3" fill="#f2f2f2"/></svg>
<svg style="left:583px;top:1832px;" width="24" height="21" viewBox="0 0 24 21"><rect width="24" height="21" fill="#6e6e6e"/><path d="M4 5 L10 10 L4 15" fill="none" stroke="#f2f2f2" stroke-width="2.400"/><rect x="12" y="14" width="8" height="2.400" fill="#f2f2f2"/></svg>
<svg style="left:749px;top:1830px;" width="25" height="25" viewBox="0 0 25 25"><g fill="#7a7a7a"><path d="M12.500 1 L25 7.500 L12.500 14 L0 7.500 Z"/><path d="M2.500 11.500 L0 13 L12.500 19.500 L25 13 L22.500 11.500 L12.500 16.800 Z"/><path d="M2.500 16.500 L0 18 L12.500 24.500 L25 18 L22.500 16.500 L12.500 21.800 Z"/></g></svg>
<svg style="left:1007px;top:1830px;" width="25" height="25" viewBox="0 0 25 25"><g fill="#7f7f7f"><path d="M12 0 C6.500 0 7 2.500 7 2.500 V6 H12.500 V7 H4 C4 7 0 6.500 0 12.500 C0 18.500 3.500 18 3.500 18 H6 V15 C6 15 5.800 11.800 9 11.800 H14.500 C14.500 11.800 17.500 11.900 17.500 9 V3.500 C17.500 3.500 18 0 12 0 Z"/><path d="M13 25 C18.500 25 18 22.500 18 22.500 V19 H12.500 V18 H21 C21 18 25 18.500 25 12.500 C25 6.500 21.500 7 21.500 7 H19 V10 C19 10 19.200 13.200 16 13.200 H10.500 C10.500 13.200 7.500 13.100 7.500 16 V21.500 C7.500 21.500 7 25 13 25 Z"/></g><circle cx="9.500" cy="3.200" r="1.200" fill="#f2f2f2"/><circle cx="15.500" cy="21.800" r="1.200" fill="#f2f2f2"/></svg>
<span class="t" style="left:92.0px;top:1832.4px;font:400 22px/22px 'DejaVu Sans','Liberation Sans',sans-serif;color:#1a1a1a;letter-spacing:-1.80px;">Git</span>
<span class="t" style="left:194.7px;top:1832.4px;font:400 22px/22px 'DejaVu Sans','Liberation Sans',sans-serif;color:#1a1a1a;letter-spacing:-1.00px;">Find</span>
<span class="t" style="left:309.0px;top:1832.4px;font:400 22px/22px 'DejaVu Sans','Liberation Sans',sans-serif;color:#1a1a1a;letter-spacing:-1.77px;">TODO</span>
<span class="t" style="left:444.0px;top:1832.4px;font:400 22px/22px 'DejaVu Sans','Liberation Sans',sans-serif;color:#1a1a1a;letter-spacing:-0.91px;">Problems</span>
<span class="t" style="left:617.0px;top:1832.4px;font:400 22px/22px 'DejaVu Sans','Liberation Sans',sans-serif;color:#1a1a1a;letter-spacing:-1.29px;">Terminal</span>
<span class="t" style="left:782.0px;top:1832.4px;font:400 22px/22px 'DejaVu Sans','Liberation Sans',sans-serif;color:#1a1a1a;letter-spacing:-0.89px;">Python Packages</span>
<span class="t" style="left:1040.0px;top:1832.4px;font:400 22px/22px 'DejaVu Sans','Liberation Sans',sans-serif;color:#1a1a1a;letter-spacing:-0.95px;">Python Console</span>
<div style="left:0px;top:1863px;width:2548px;height:2px;background:#d6d6d6;"></div>
<div style="left:0px;top:1865px;width:2548px;height:39px;background:#f2f2f2;"></div>
<svg style="left:11px;top:1872px;" width="26" height="26" viewBox="0 0 26 26"><rect x="5.500" y="1" width="19" height="19" fill="none" stroke="#8a8a8a" stroke-width="1.600"/><path d="M1.500 5 V24.500 H21" fill="none" stroke="#8a8a8a" stroke-width="1.600"/></svg>
<span class="t" style="left:62.2px;top:1873.6px;font:400 22px/22px 'DejaVu Sans','Liberation Sans',sans-serif;color:#1a1a1a;letter-spacing:-1.08px;">Indexing completed in 23 sec. Shared indexes were applied to 61% of files (1,661 of 2,709). (27 minutes ago)</span>
<span class="t" style="left:2055.0px;top:1873.1px;font:400 23px/23px 'Liberation Sans','DejaVu Sans',sans-serif;color:#1a1a1a;letter-spacing:-1.50px;">8:1</span>
<span class="t" style="left:2108.0px;top:1873.6px;font:400 22px/22px 'DejaVu Sans','Liberation Sans',sans-serif;color:#1a1a1a;letter-spacing:-1.00px;">LF</span>
<span class="t" style="left:2156.8px;top:1873.6px;font:400 22px/22px 'DejaVu Sans','Liberation Sans',sans-serif;color:#1a1a1a;letter-spacing:0.05px;">UTF-8</span>
<span class="t" style="left:2247.0px;top:1873.6px;font:400 22px/22px 'DejaVu Sans','Liberation Sans',sans-serif;color:#1a1a1a;letter-spacing:-0.93px;">4 spaces</span>
<span class="t" style="left:2362.0px;top:1873.6px;font:400 22px/22px 'DejaVu Sans','Liberation Sans',sans-serif;color:#1a1a1a;letter-spacing:-0.9px;">Python 3.9 (python-intermediate-inflammation)</span>
<svg style="left:0;top:1884px" width="20" height="20"><path fill="#3a1a5a" d="M0 0 Q0 20 20 20 H0 Z"/></svg>
<div style="left:3.6px;top:1216.3px;width:2543px;height:654px;background:transparent;border:5.400px solid #a82b18;border-radius:23px;box-sizing:border-box;"></div>
<div style="left:128.8px;top:1810.3px;width:138px;height:58px;background:transparent;border:5px solid #a82b18;border-radius:22px;box-sizing:border-box;"></div>
</div></body></html>
